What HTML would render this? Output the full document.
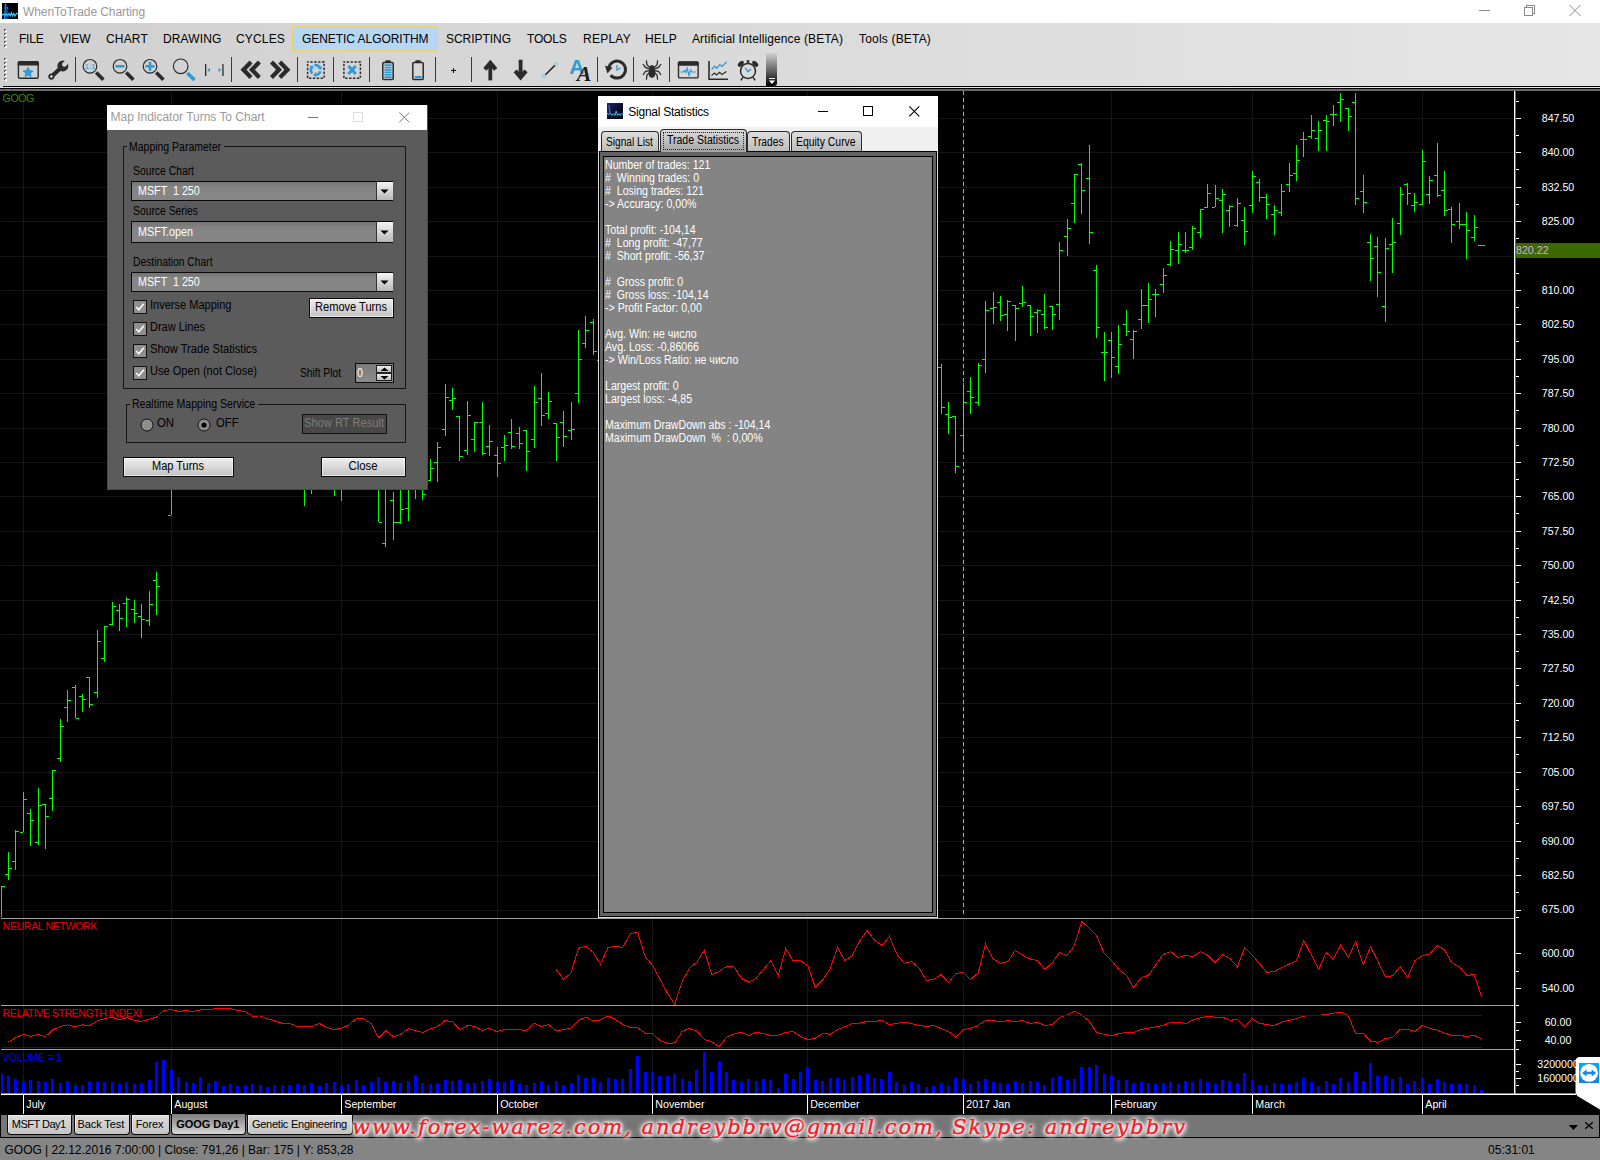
<!DOCTYPE html><html><head><meta charset="utf-8"><title>WhenToTrade Charting</title><style>html,body{margin:0;padding:0;background:#000}
body{position:relative;width:1600px;height:1160px;overflow:hidden;font-family:"Liberation Sans",sans-serif}
.a{position:absolute}
.t{position:absolute;white-space:pre;}
</style></head><body><svg class="a" style="left:0;top:0" width="1600" height="1160" viewBox="0 0 1600 1160" shape-rendering="crispEdges"><rect x="23" y="91" width="1" height="827" fill="#151515"/><rect x="171" y="91" width="1" height="827" fill="#151515"/><rect x="341" y="91" width="1" height="827" fill="#151515"/><rect x="497" y="91" width="1" height="827" fill="#151515"/><rect x="652" y="91" width="1" height="827" fill="#151515"/><rect x="807" y="91" width="1" height="827" fill="#151515"/><rect x="963" y="91" width="1" height="827" fill="#151515"/><rect x="1111" y="91" width="1" height="827" fill="#151515"/><rect x="1252" y="91" width="1" height="827" fill="#151515"/><rect x="1422" y="91" width="1" height="827" fill="#151515"/><rect x="0" y="118" width="1514" height="1" fill="#151515"/><rect x="0" y="152" width="1514" height="1" fill="#151515"/><rect x="0" y="187" width="1514" height="1" fill="#151515"/><rect x="0" y="221" width="1514" height="1" fill="#151515"/><rect x="0" y="256" width="1514" height="1" fill="#151515"/><rect x="0" y="290" width="1514" height="1" fill="#151515"/><rect x="0" y="324" width="1514" height="1" fill="#151515"/><rect x="0" y="359" width="1514" height="1" fill="#151515"/><rect x="0" y="393" width="1514" height="1" fill="#151515"/><rect x="0" y="428" width="1514" height="1" fill="#151515"/><rect x="0" y="462" width="1514" height="1" fill="#151515"/><rect x="0" y="496" width="1514" height="1" fill="#151515"/><rect x="0" y="531" width="1514" height="1" fill="#151515"/><rect x="0" y="565" width="1514" height="1" fill="#151515"/><rect x="0" y="600" width="1514" height="1" fill="#151515"/><rect x="0" y="634" width="1514" height="1" fill="#151515"/><rect x="0" y="668" width="1514" height="1" fill="#151515"/><rect x="0" y="703" width="1514" height="1" fill="#151515"/><rect x="0" y="737" width="1514" height="1" fill="#151515"/><rect x="0" y="772" width="1514" height="1" fill="#151515"/><rect x="0" y="806" width="1514" height="1" fill="#151515"/><rect x="0" y="841" width="1514" height="1" fill="#151515"/><rect x="0" y="875" width="1514" height="1" fill="#151515"/><rect x="0" y="910" width="1514" height="1" fill="#151515"/><rect x="23" y="919" width="1" height="175" fill="#151515"/><rect x="171" y="919" width="1" height="175" fill="#151515"/><rect x="341" y="919" width="1" height="175" fill="#151515"/><rect x="497" y="919" width="1" height="175" fill="#151515"/><rect x="652" y="919" width="1" height="175" fill="#151515"/><rect x="807" y="919" width="1" height="175" fill="#151515"/><rect x="963" y="919" width="1" height="175" fill="#151515"/><rect x="1111" y="919" width="1" height="175" fill="#151515"/><rect x="1252" y="919" width="1" height="175" fill="#151515"/><rect x="1422" y="919" width="1" height="175" fill="#151515"/><rect x="0" y="918" width="1514" height="1" fill="#a0a0a0"/><rect x="0" y="1005" width="1514" height="1" fill="#a0a0a0"/><rect x="0" y="1049" width="1514" height="1" fill="#a0a0a0"/><rect x="1" y="886" width="1" height="31" fill="#00ff00"/><rect x="2" y="886" width="3" height="1" fill="#00ff00"/><rect x="8" y="852" width="1" height="28" fill="#00ff00"/><rect x="5" y="874" width="3" height="1" fill="#00ff00"/><rect x="9" y="868" width="3" height="1" fill="#00ff00"/><rect x="15" y="830" width="1" height="40" fill="#00ff00"/><rect x="12" y="861" width="3" height="1" fill="#00ff00"/><rect x="16" y="831" width="3" height="1" fill="#00ff00"/><rect x="23" y="792" width="1" height="40" fill="#00ff00"/><rect x="20" y="832" width="3" height="1" fill="#00ff00"/><rect x="24" y="799" width="3" height="1" fill="#00ff00"/><rect x="30" y="809" width="1" height="37" fill="#00ff00"/><rect x="27" y="813" width="3" height="1" fill="#00ff00"/><rect x="31" y="820" width="3" height="1" fill="#00ff00"/><rect x="38" y="788" width="1" height="57" fill="#00ff00"/><rect x="35" y="842" width="3" height="1" fill="#00ff00"/><rect x="39" y="805" width="3" height="1" fill="#00ff00"/><rect x="45" y="804" width="1" height="45" fill="#00ff00"/><rect x="42" y="804" width="3" height="1" fill="#00ff00"/><rect x="46" y="816" width="3" height="1" fill="#00ff00"/><rect x="52" y="770" width="1" height="41" fill="#00ff00"/><rect x="49" y="798" width="3" height="1" fill="#00ff00"/><rect x="53" y="770" width="3" height="1" fill="#00ff00"/><rect x="60" y="719" width="1" height="43" fill="#00ff00"/><rect x="57" y="758" width="3" height="1" fill="#00ff00"/><rect x="61" y="726" width="3" height="1" fill="#00ff00"/><rect x="67" y="690" width="1" height="32" fill="#00ff00"/><rect x="64" y="707" width="3" height="1" fill="#00ff00"/><rect x="68" y="700" width="3" height="1" fill="#00ff00"/><rect x="75" y="685" width="1" height="33" fill="#00ff00"/><rect x="72" y="687" width="3" height="1" fill="#00ff00"/><rect x="76" y="718" width="3" height="1" fill="#00ff00"/><rect x="82" y="694" width="1" height="18" fill="#00ff00"/><rect x="79" y="696" width="3" height="1" fill="#00ff00"/><rect x="83" y="699" width="3" height="1" fill="#00ff00"/><rect x="89" y="677" width="1" height="31" fill="#00ff00"/><rect x="86" y="677" width="3" height="1" fill="#00ff00"/><rect x="90" y="704" width="3" height="1" fill="#00ff00"/><rect x="97" y="630" width="1" height="68" fill="#00ff00"/><rect x="94" y="692" width="3" height="1" fill="#00ff00"/><rect x="98" y="641" width="3" height="1" fill="#00ff00"/><rect x="104" y="626" width="1" height="36" fill="#00ff00"/><rect x="101" y="658" width="3" height="1" fill="#00ff00"/><rect x="105" y="626" width="3" height="1" fill="#00ff00"/><rect x="112" y="602" width="1" height="23" fill="#00ff00"/><rect x="109" y="624" width="3" height="1" fill="#00ff00"/><rect x="113" y="606" width="3" height="1" fill="#00ff00"/><rect x="119" y="604" width="1" height="27" fill="#00ff00"/><rect x="116" y="610" width="3" height="1" fill="#00ff00"/><rect x="120" y="618" width="3" height="1" fill="#00ff00"/><rect x="126" y="597" width="1" height="30" fill="#00ff00"/><rect x="123" y="603" width="3" height="1" fill="#00ff00"/><rect x="127" y="599" width="3" height="1" fill="#00ff00"/><rect x="134" y="600" width="1" height="23" fill="#00ff00"/><rect x="131" y="609" width="3" height="1" fill="#00ff00"/><rect x="135" y="613" width="3" height="1" fill="#00ff00"/><rect x="141" y="604" width="1" height="34" fill="#00ff00"/><rect x="138" y="616" width="3" height="1" fill="#00ff00"/><rect x="142" y="619" width="3" height="1" fill="#00ff00"/><rect x="149" y="591" width="1" height="35" fill="#00ff00"/><rect x="146" y="620" width="3" height="1" fill="#00ff00"/><rect x="150" y="604" width="3" height="1" fill="#00ff00"/><rect x="156" y="572" width="1" height="43" fill="#00ff00"/><rect x="153" y="580" width="3" height="1" fill="#00ff00"/><rect x="157" y="586" width="3" height="1" fill="#00ff00"/><rect x="171" y="480" width="1" height="35" fill="#00ff00"/><rect x="168" y="515" width="3" height="1" fill="#00ff00"/><rect x="304" y="480" width="1" height="26" fill="#00ff00"/><rect x="311" y="480" width="1" height="14" fill="#00ff00"/><rect x="334" y="480" width="1" height="16" fill="#00ff00"/><rect x="341" y="480" width="1" height="21" fill="#00ff00"/><rect x="378" y="480" width="1" height="42" fill="#00ff00"/><rect x="379" y="522" width="3" height="1" fill="#00ff00"/><rect x="385" y="480" width="1" height="67" fill="#00ff00"/><rect x="382" y="543" width="3" height="1" fill="#00ff00"/><rect x="393" y="492" width="1" height="48" fill="#00ff00"/><rect x="390" y="500" width="3" height="1" fill="#00ff00"/><rect x="394" y="522" width="3" height="1" fill="#00ff00"/><rect x="400" y="480" width="1" height="44" fill="#00ff00"/><rect x="397" y="522" width="3" height="1" fill="#00ff00"/><rect x="401" y="509" width="3" height="1" fill="#00ff00"/><rect x="408" y="480" width="1" height="41" fill="#00ff00"/><rect x="405" y="508" width="3" height="1" fill="#00ff00"/><rect x="415" y="480" width="1" height="19" fill="#00ff00"/><rect x="422" y="480" width="1" height="20" fill="#00ff00"/><rect x="423" y="494" width="3" height="1" fill="#00ff00"/><rect x="430" y="459" width="1" height="22" fill="#00ff00"/><rect x="427" y="480" width="3" height="1" fill="#00ff00"/><rect x="431" y="468" width="3" height="1" fill="#00ff00"/><rect x="437" y="442" width="1" height="40" fill="#00ff00"/><rect x="434" y="462" width="3" height="1" fill="#00ff00"/><rect x="438" y="447" width="3" height="1" fill="#00ff00"/><rect x="445" y="384" width="1" height="52" fill="#00ff00"/><rect x="442" y="429" width="3" height="1" fill="#00ff00"/><rect x="446" y="397" width="3" height="1" fill="#00ff00"/><rect x="452" y="388" width="1" height="22" fill="#00ff00"/><rect x="449" y="400" width="3" height="1" fill="#00ff00"/><rect x="453" y="398" width="3" height="1" fill="#00ff00"/><rect x="459" y="416" width="1" height="45" fill="#00ff00"/><rect x="456" y="416" width="3" height="1" fill="#00ff00"/><rect x="460" y="456" width="3" height="1" fill="#00ff00"/><rect x="467" y="401" width="1" height="54" fill="#00ff00"/><rect x="464" y="450" width="3" height="1" fill="#00ff00"/><rect x="468" y="415" width="3" height="1" fill="#00ff00"/><rect x="474" y="422" width="1" height="30" fill="#00ff00"/><rect x="471" y="439" width="3" height="1" fill="#00ff00"/><rect x="475" y="422" width="3" height="1" fill="#00ff00"/><rect x="482" y="402" width="1" height="53" fill="#00ff00"/><rect x="479" y="422" width="3" height="1" fill="#00ff00"/><rect x="483" y="453" width="3" height="1" fill="#00ff00"/><rect x="489" y="425" width="1" height="31" fill="#00ff00"/><rect x="486" y="446" width="3" height="1" fill="#00ff00"/><rect x="490" y="441" width="3" height="1" fill="#00ff00"/><rect x="497" y="447" width="1" height="30" fill="#00ff00"/><rect x="494" y="455" width="3" height="1" fill="#00ff00"/><rect x="498" y="463" width="3" height="1" fill="#00ff00"/><rect x="504" y="435" width="1" height="26" fill="#00ff00"/><rect x="501" y="447" width="3" height="1" fill="#00ff00"/><rect x="505" y="445" width="3" height="1" fill="#00ff00"/><rect x="511" y="419" width="1" height="30" fill="#00ff00"/><rect x="508" y="432" width="3" height="1" fill="#00ff00"/><rect x="512" y="446" width="3" height="1" fill="#00ff00"/><rect x="519" y="427" width="1" height="22" fill="#00ff00"/><rect x="516" y="433" width="3" height="1" fill="#00ff00"/><rect x="520" y="443" width="3" height="1" fill="#00ff00"/><rect x="526" y="430" width="1" height="41" fill="#00ff00"/><rect x="523" y="430" width="3" height="1" fill="#00ff00"/><rect x="527" y="451" width="3" height="1" fill="#00ff00"/><rect x="534" y="386" width="1" height="62" fill="#00ff00"/><rect x="531" y="439" width="3" height="1" fill="#00ff00"/><rect x="535" y="402" width="3" height="1" fill="#00ff00"/><rect x="541" y="373" width="1" height="53" fill="#00ff00"/><rect x="538" y="398" width="3" height="1" fill="#00ff00"/><rect x="542" y="415" width="3" height="1" fill="#00ff00"/><rect x="548" y="392" width="1" height="27" fill="#00ff00"/><rect x="545" y="413" width="3" height="1" fill="#00ff00"/><rect x="549" y="401" width="3" height="1" fill="#00ff00"/><rect x="556" y="423" width="1" height="38" fill="#00ff00"/><rect x="553" y="423" width="3" height="1" fill="#00ff00"/><rect x="557" y="437" width="3" height="1" fill="#00ff00"/><rect x="563" y="411" width="1" height="36" fill="#00ff00"/><rect x="560" y="422" width="3" height="1" fill="#00ff00"/><rect x="564" y="436" width="3" height="1" fill="#00ff00"/><rect x="571" y="402" width="1" height="38" fill="#00ff00"/><rect x="568" y="430" width="3" height="1" fill="#00ff00"/><rect x="572" y="429" width="3" height="1" fill="#00ff00"/><rect x="578" y="330" width="1" height="73" fill="#00ff00"/><rect x="575" y="393" width="3" height="1" fill="#00ff00"/><rect x="579" y="359" width="3" height="1" fill="#00ff00"/><rect x="585" y="316" width="1" height="32" fill="#00ff00"/><rect x="582" y="343" width="3" height="1" fill="#00ff00"/><rect x="586" y="330" width="3" height="1" fill="#00ff00"/><rect x="593" y="319" width="1" height="36" fill="#00ff00"/><rect x="590" y="322" width="3" height="1" fill="#00ff00"/><rect x="594" y="351" width="3" height="1" fill="#00ff00"/><rect x="941" y="364" width="1" height="50" fill="#00ff00"/><rect x="938" y="367" width="3" height="1" fill="#00ff00"/><rect x="942" y="407" width="3" height="1" fill="#00ff00"/><rect x="948" y="402" width="1" height="32" fill="#00ff00"/><rect x="945" y="414" width="3" height="1" fill="#00ff00"/><rect x="949" y="417" width="3" height="1" fill="#00ff00"/><rect x="955" y="416" width="1" height="57" fill="#00ff00"/><rect x="952" y="416" width="3" height="1" fill="#00ff00"/><rect x="956" y="466" width="3" height="1" fill="#00ff00"/><rect x="963" y="383" width="1" height="65" fill="#00ff00"/><rect x="960" y="435" width="3" height="1" fill="#00ff00"/><rect x="964" y="402" width="3" height="1" fill="#00ff00"/><rect x="970" y="377" width="1" height="37" fill="#00ff00"/><rect x="967" y="391" width="3" height="1" fill="#00ff00"/><rect x="971" y="397" width="3" height="1" fill="#00ff00"/><rect x="978" y="363" width="1" height="43" fill="#00ff00"/><rect x="975" y="402" width="3" height="1" fill="#00ff00"/><rect x="979" y="365" width="3" height="1" fill="#00ff00"/><rect x="985" y="301" width="1" height="72" fill="#00ff00"/><rect x="982" y="359" width="3" height="1" fill="#00ff00"/><rect x="986" y="310" width="3" height="1" fill="#00ff00"/><rect x="993" y="292" width="1" height="32" fill="#00ff00"/><rect x="990" y="308" width="3" height="1" fill="#00ff00"/><rect x="994" y="307" width="3" height="1" fill="#00ff00"/><rect x="1000" y="296" width="1" height="25" fill="#00ff00"/><rect x="997" y="302" width="3" height="1" fill="#00ff00"/><rect x="1001" y="315" width="3" height="1" fill="#00ff00"/><rect x="1007" y="300" width="1" height="31" fill="#00ff00"/><rect x="1004" y="314" width="3" height="1" fill="#00ff00"/><rect x="1008" y="301" width="3" height="1" fill="#00ff00"/><rect x="1015" y="305" width="1" height="36" fill="#00ff00"/><rect x="1012" y="305" width="3" height="1" fill="#00ff00"/><rect x="1016" y="308" width="3" height="1" fill="#00ff00"/><rect x="1022" y="286" width="1" height="21" fill="#00ff00"/><rect x="1019" y="303" width="3" height="1" fill="#00ff00"/><rect x="1023" y="302" width="3" height="1" fill="#00ff00"/><rect x="1030" y="305" width="1" height="31" fill="#00ff00"/><rect x="1027" y="305" width="3" height="1" fill="#00ff00"/><rect x="1031" y="316" width="3" height="1" fill="#00ff00"/><rect x="1037" y="309" width="1" height="24" fill="#00ff00"/><rect x="1034" y="312" width="3" height="1" fill="#00ff00"/><rect x="1038" y="310" width="3" height="1" fill="#00ff00"/><rect x="1044" y="294" width="1" height="35" fill="#00ff00"/><rect x="1041" y="314" width="3" height="1" fill="#00ff00"/><rect x="1045" y="327" width="3" height="1" fill="#00ff00"/><rect x="1052" y="306" width="1" height="24" fill="#00ff00"/><rect x="1049" y="306" width="3" height="1" fill="#00ff00"/><rect x="1053" y="314" width="3" height="1" fill="#00ff00"/><rect x="1059" y="242" width="1" height="78" fill="#00ff00"/><rect x="1056" y="304" width="3" height="1" fill="#00ff00"/><rect x="1060" y="250" width="3" height="1" fill="#00ff00"/><rect x="1067" y="219" width="1" height="37" fill="#00ff00"/><rect x="1064" y="236" width="3" height="1" fill="#00ff00"/><rect x="1068" y="228" width="3" height="1" fill="#00ff00"/><rect x="1074" y="174" width="1" height="49" fill="#00ff00"/><rect x="1071" y="203" width="3" height="1" fill="#00ff00"/><rect x="1075" y="174" width="3" height="1" fill="#00ff00"/><rect x="1081" y="163" width="1" height="51" fill="#00ff00"/><rect x="1078" y="164" width="3" height="1" fill="#00ff00"/><rect x="1082" y="190" width="3" height="1" fill="#00ff00"/><rect x="1089" y="145" width="1" height="99" fill="#00ff00"/><rect x="1086" y="178" width="3" height="1" fill="#00ff00"/><rect x="1090" y="232" width="3" height="1" fill="#00ff00"/><rect x="1096" y="265" width="1" height="73" fill="#00ff00"/><rect x="1093" y="270" width="3" height="1" fill="#00ff00"/><rect x="1097" y="327" width="3" height="1" fill="#00ff00"/><rect x="1104" y="332" width="1" height="49" fill="#00ff00"/><rect x="1101" y="352" width="3" height="1" fill="#00ff00"/><rect x="1105" y="352" width="3" height="1" fill="#00ff00"/><rect x="1111" y="332" width="1" height="46" fill="#00ff00"/><rect x="1108" y="340" width="3" height="1" fill="#00ff00"/><rect x="1112" y="357" width="3" height="1" fill="#00ff00"/><rect x="1118" y="325" width="1" height="49" fill="#00ff00"/><rect x="1115" y="366" width="3" height="1" fill="#00ff00"/><rect x="1119" y="344" width="3" height="1" fill="#00ff00"/><rect x="1126" y="310" width="1" height="26" fill="#00ff00"/><rect x="1123" y="324" width="3" height="1" fill="#00ff00"/><rect x="1127" y="331" width="3" height="1" fill="#00ff00"/><rect x="1133" y="330" width="1" height="29" fill="#00ff00"/><rect x="1130" y="339" width="3" height="1" fill="#00ff00"/><rect x="1134" y="331" width="3" height="1" fill="#00ff00"/><rect x="1141" y="289" width="1" height="40" fill="#00ff00"/><rect x="1138" y="319" width="3" height="1" fill="#00ff00"/><rect x="1142" y="305" width="3" height="1" fill="#00ff00"/><rect x="1148" y="283" width="1" height="40" fill="#00ff00"/><rect x="1145" y="305" width="3" height="1" fill="#00ff00"/><rect x="1149" y="299" width="3" height="1" fill="#00ff00"/><rect x="1155" y="289" width="1" height="28" fill="#00ff00"/><rect x="1152" y="294" width="3" height="1" fill="#00ff00"/><rect x="1156" y="294" width="3" height="1" fill="#00ff00"/><rect x="1163" y="268" width="1" height="25" fill="#00ff00"/><rect x="1160" y="284" width="3" height="1" fill="#00ff00"/><rect x="1164" y="275" width="3" height="1" fill="#00ff00"/><rect x="1170" y="241" width="1" height="25" fill="#00ff00"/><rect x="1167" y="264" width="3" height="1" fill="#00ff00"/><rect x="1171" y="249" width="3" height="1" fill="#00ff00"/><rect x="1178" y="232" width="1" height="32" fill="#00ff00"/><rect x="1175" y="250" width="3" height="1" fill="#00ff00"/><rect x="1179" y="244" width="3" height="1" fill="#00ff00"/><rect x="1185" y="232" width="1" height="21" fill="#00ff00"/><rect x="1182" y="250" width="3" height="1" fill="#00ff00"/><rect x="1186" y="250" width="3" height="1" fill="#00ff00"/><rect x="1192" y="226" width="1" height="24" fill="#00ff00"/><rect x="1189" y="247" width="3" height="1" fill="#00ff00"/><rect x="1193" y="228" width="3" height="1" fill="#00ff00"/><rect x="1200" y="209" width="1" height="29" fill="#00ff00"/><rect x="1197" y="232" width="3" height="1" fill="#00ff00"/><rect x="1201" y="209" width="3" height="1" fill="#00ff00"/><rect x="1207" y="184" width="1" height="24" fill="#00ff00"/><rect x="1204" y="207" width="3" height="1" fill="#00ff00"/><rect x="1208" y="193" width="3" height="1" fill="#00ff00"/><rect x="1215" y="185" width="1" height="22" fill="#00ff00"/><rect x="1212" y="207" width="3" height="1" fill="#00ff00"/><rect x="1216" y="198" width="3" height="1" fill="#00ff00"/><rect x="1222" y="189" width="1" height="44" fill="#00ff00"/><rect x="1219" y="200" width="3" height="1" fill="#00ff00"/><rect x="1223" y="194" width="3" height="1" fill="#00ff00"/><rect x="1229" y="205" width="1" height="22" fill="#00ff00"/><rect x="1226" y="210" width="3" height="1" fill="#00ff00"/><rect x="1230" y="206" width="3" height="1" fill="#00ff00"/><rect x="1237" y="198" width="1" height="29" fill="#00ff00"/><rect x="1234" y="225" width="3" height="1" fill="#00ff00"/><rect x="1238" y="203" width="3" height="1" fill="#00ff00"/><rect x="1244" y="207" width="1" height="38" fill="#00ff00"/><rect x="1241" y="220" width="3" height="1" fill="#00ff00"/><rect x="1245" y="231" width="3" height="1" fill="#00ff00"/><rect x="1252" y="171" width="1" height="42" fill="#00ff00"/><rect x="1249" y="205" width="3" height="1" fill="#00ff00"/><rect x="1253" y="176" width="3" height="1" fill="#00ff00"/><rect x="1259" y="179" width="1" height="23" fill="#00ff00"/><rect x="1256" y="182" width="3" height="1" fill="#00ff00"/><rect x="1260" y="197" width="3" height="1" fill="#00ff00"/><rect x="1266" y="194" width="1" height="25" fill="#00ff00"/><rect x="1263" y="197" width="3" height="1" fill="#00ff00"/><rect x="1267" y="204" width="3" height="1" fill="#00ff00"/><rect x="1274" y="205" width="1" height="30" fill="#00ff00"/><rect x="1271" y="214" width="3" height="1" fill="#00ff00"/><rect x="1275" y="210" width="3" height="1" fill="#00ff00"/><rect x="1281" y="184" width="1" height="32" fill="#00ff00"/><rect x="1278" y="212" width="3" height="1" fill="#00ff00"/><rect x="1282" y="191" width="3" height="1" fill="#00ff00"/><rect x="1289" y="163" width="1" height="29" fill="#00ff00"/><rect x="1286" y="184" width="3" height="1" fill="#00ff00"/><rect x="1290" y="175" width="3" height="1" fill="#00ff00"/><rect x="1296" y="145" width="1" height="36" fill="#00ff00"/><rect x="1293" y="173" width="3" height="1" fill="#00ff00"/><rect x="1297" y="160" width="3" height="1" fill="#00ff00"/><rect x="1303" y="132" width="1" height="25" fill="#00ff00"/><rect x="1300" y="139" width="3" height="1" fill="#00ff00"/><rect x="1304" y="139" width="3" height="1" fill="#00ff00"/><rect x="1311" y="115" width="1" height="24" fill="#00ff00"/><rect x="1308" y="136" width="3" height="1" fill="#00ff00"/><rect x="1312" y="130" width="3" height="1" fill="#00ff00"/><rect x="1318" y="121" width="1" height="30" fill="#00ff00"/><rect x="1315" y="138" width="3" height="1" fill="#00ff00"/><rect x="1319" y="130" width="3" height="1" fill="#00ff00"/><rect x="1326" y="115" width="1" height="36" fill="#00ff00"/><rect x="1323" y="120" width="3" height="1" fill="#00ff00"/><rect x="1327" y="121" width="3" height="1" fill="#00ff00"/><rect x="1333" y="105" width="1" height="21" fill="#00ff00"/><rect x="1330" y="114" width="3" height="1" fill="#00ff00"/><rect x="1334" y="114" width="3" height="1" fill="#00ff00"/><rect x="1340" y="93" width="1" height="29" fill="#00ff00"/><rect x="1337" y="102" width="3" height="1" fill="#00ff00"/><rect x="1341" y="99" width="3" height="1" fill="#00ff00"/><rect x="1348" y="108" width="1" height="23" fill="#00ff00"/><rect x="1345" y="108" width="3" height="1" fill="#00ff00"/><rect x="1349" y="116" width="3" height="1" fill="#00ff00"/><rect x="1355" y="93" width="1" height="112" fill="#00ff00"/><rect x="1352" y="102" width="3" height="1" fill="#00ff00"/><rect x="1356" y="198" width="3" height="1" fill="#00ff00"/><rect x="1363" y="175" width="1" height="38" fill="#00ff00"/><rect x="1360" y="191" width="3" height="1" fill="#00ff00"/><rect x="1364" y="202" width="3" height="1" fill="#00ff00"/><rect x="1370" y="234" width="1" height="47" fill="#00ff00"/><rect x="1367" y="242" width="3" height="1" fill="#00ff00"/><rect x="1371" y="258" width="3" height="1" fill="#00ff00"/><rect x="1377" y="237" width="1" height="60" fill="#00ff00"/><rect x="1374" y="246" width="3" height="1" fill="#00ff00"/><rect x="1378" y="272" width="3" height="1" fill="#00ff00"/><rect x="1385" y="238" width="1" height="84" fill="#00ff00"/><rect x="1382" y="306" width="3" height="1" fill="#00ff00"/><rect x="1386" y="248" width="3" height="1" fill="#00ff00"/><rect x="1392" y="218" width="1" height="55" fill="#00ff00"/><rect x="1389" y="244" width="3" height="1" fill="#00ff00"/><rect x="1393" y="242" width="3" height="1" fill="#00ff00"/><rect x="1400" y="187" width="1" height="48" fill="#00ff00"/><rect x="1397" y="223" width="3" height="1" fill="#00ff00"/><rect x="1401" y="194" width="3" height="1" fill="#00ff00"/><rect x="1407" y="183" width="1" height="22" fill="#00ff00"/><rect x="1404" y="184" width="3" height="1" fill="#00ff00"/><rect x="1408" y="193" width="3" height="1" fill="#00ff00"/><rect x="1414" y="193" width="1" height="19" fill="#00ff00"/><rect x="1411" y="205" width="3" height="1" fill="#00ff00"/><rect x="1415" y="202" width="3" height="1" fill="#00ff00"/><rect x="1422" y="150" width="1" height="55" fill="#00ff00"/><rect x="1419" y="204" width="3" height="1" fill="#00ff00"/><rect x="1423" y="161" width="3" height="1" fill="#00ff00"/><rect x="1429" y="176" width="1" height="28" fill="#00ff00"/><rect x="1426" y="194" width="3" height="1" fill="#00ff00"/><rect x="1430" y="180" width="3" height="1" fill="#00ff00"/><rect x="1437" y="143" width="1" height="54" fill="#00ff00"/><rect x="1434" y="175" width="3" height="1" fill="#00ff00"/><rect x="1438" y="195" width="3" height="1" fill="#00ff00"/><rect x="1444" y="171" width="1" height="45" fill="#00ff00"/><rect x="1441" y="190" width="3" height="1" fill="#00ff00"/><rect x="1445" y="210" width="3" height="1" fill="#00ff00"/><rect x="1451" y="207" width="1" height="36" fill="#00ff00"/><rect x="1448" y="209" width="3" height="1" fill="#00ff00"/><rect x="1452" y="224" width="3" height="1" fill="#00ff00"/><rect x="1459" y="203" width="1" height="26" fill="#00ff00"/><rect x="1456" y="221" width="3" height="1" fill="#00ff00"/><rect x="1460" y="224" width="3" height="1" fill="#00ff00"/><rect x="1466" y="212" width="1" height="47" fill="#00ff00"/><rect x="1463" y="224" width="3" height="1" fill="#00ff00"/><rect x="1467" y="230" width="3" height="1" fill="#00ff00"/><rect x="1474" y="215" width="1" height="26" fill="#00ff00"/><rect x="1471" y="237" width="3" height="1" fill="#00ff00"/><rect x="1475" y="227" width="3" height="1" fill="#00ff00"/><rect x="1478" y="245" width="7" height="1" fill="#00ff00"/><rect x="597" y="360" width="1" height="1" fill="#00ff00"/><rect x="963" y="91" width="1" height="4" fill="#a8a8a8"/><rect x="963" y="98" width="1" height="4" fill="#a8a8a8"/><rect x="963" y="105" width="1" height="4" fill="#a8a8a8"/><rect x="963" y="112" width="1" height="4" fill="#a8a8a8"/><rect x="963" y="119" width="1" height="4" fill="#a8a8a8"/><rect x="963" y="126" width="1" height="4" fill="#a8a8a8"/><rect x="963" y="133" width="1" height="4" fill="#a8a8a8"/><rect x="963" y="140" width="1" height="4" fill="#a8a8a8"/><rect x="963" y="147" width="1" height="4" fill="#a8a8a8"/><rect x="963" y="154" width="1" height="4" fill="#a8a8a8"/><rect x="963" y="161" width="1" height="4" fill="#a8a8a8"/><rect x="963" y="168" width="1" height="4" fill="#a8a8a8"/><rect x="963" y="175" width="1" height="4" fill="#a8a8a8"/><rect x="963" y="182" width="1" height="4" fill="#a8a8a8"/><rect x="963" y="189" width="1" height="4" fill="#a8a8a8"/><rect x="963" y="196" width="1" height="4" fill="#a8a8a8"/><rect x="963" y="203" width="1" height="4" fill="#a8a8a8"/><rect x="963" y="210" width="1" height="4" fill="#a8a8a8"/><rect x="963" y="217" width="1" height="4" fill="#a8a8a8"/><rect x="963" y="224" width="1" height="4" fill="#a8a8a8"/><rect x="963" y="231" width="1" height="4" fill="#a8a8a8"/><rect x="963" y="238" width="1" height="4" fill="#a8a8a8"/><rect x="963" y="245" width="1" height="4" fill="#a8a8a8"/><rect x="963" y="252" width="1" height="4" fill="#a8a8a8"/><rect x="963" y="259" width="1" height="4" fill="#a8a8a8"/><rect x="963" y="266" width="1" height="4" fill="#a8a8a8"/><rect x="963" y="273" width="1" height="4" fill="#a8a8a8"/><rect x="963" y="280" width="1" height="4" fill="#a8a8a8"/><rect x="963" y="287" width="1" height="4" fill="#a8a8a8"/><rect x="963" y="294" width="1" height="4" fill="#a8a8a8"/><rect x="963" y="301" width="1" height="4" fill="#a8a8a8"/><rect x="963" y="308" width="1" height="4" fill="#a8a8a8"/><rect x="963" y="315" width="1" height="4" fill="#a8a8a8"/><rect x="963" y="322" width="1" height="4" fill="#a8a8a8"/><rect x="963" y="329" width="1" height="4" fill="#a8a8a8"/><rect x="963" y="336" width="1" height="4" fill="#a8a8a8"/><rect x="963" y="343" width="1" height="4" fill="#a8a8a8"/><rect x="963" y="350" width="1" height="4" fill="#a8a8a8"/><rect x="963" y="357" width="1" height="4" fill="#a8a8a8"/><rect x="963" y="364" width="1" height="4" fill="#a8a8a8"/><rect x="963" y="371" width="1" height="4" fill="#a8a8a8"/><rect x="963" y="378" width="1" height="4" fill="#a8a8a8"/><rect x="963" y="385" width="1" height="4" fill="#a8a8a8"/><rect x="963" y="392" width="1" height="4" fill="#a8a8a8"/><rect x="963" y="399" width="1" height="4" fill="#a8a8a8"/><rect x="963" y="406" width="1" height="4" fill="#a8a8a8"/><rect x="963" y="413" width="1" height="4" fill="#a8a8a8"/><rect x="963" y="420" width="1" height="4" fill="#a8a8a8"/><rect x="963" y="427" width="1" height="4" fill="#a8a8a8"/><rect x="963" y="434" width="1" height="4" fill="#a8a8a8"/><rect x="963" y="441" width="1" height="4" fill="#a8a8a8"/><rect x="963" y="448" width="1" height="4" fill="#a8a8a8"/><rect x="963" y="455" width="1" height="4" fill="#a8a8a8"/><rect x="963" y="462" width="1" height="4" fill="#a8a8a8"/><rect x="963" y="469" width="1" height="4" fill="#a8a8a8"/><rect x="963" y="476" width="1" height="4" fill="#a8a8a8"/><rect x="963" y="483" width="1" height="4" fill="#a8a8a8"/><rect x="963" y="490" width="1" height="4" fill="#a8a8a8"/><rect x="963" y="497" width="1" height="4" fill="#a8a8a8"/><rect x="963" y="504" width="1" height="4" fill="#a8a8a8"/><rect x="963" y="511" width="1" height="4" fill="#a8a8a8"/><rect x="963" y="518" width="1" height="4" fill="#a8a8a8"/><rect x="963" y="525" width="1" height="4" fill="#a8a8a8"/><rect x="963" y="532" width="1" height="4" fill="#a8a8a8"/><rect x="963" y="539" width="1" height="4" fill="#a8a8a8"/><rect x="963" y="546" width="1" height="4" fill="#a8a8a8"/><rect x="963" y="553" width="1" height="4" fill="#a8a8a8"/><rect x="963" y="560" width="1" height="4" fill="#a8a8a8"/><rect x="963" y="567" width="1" height="4" fill="#a8a8a8"/><rect x="963" y="574" width="1" height="4" fill="#a8a8a8"/><rect x="963" y="581" width="1" height="4" fill="#a8a8a8"/><rect x="963" y="588" width="1" height="4" fill="#a8a8a8"/><rect x="963" y="595" width="1" height="4" fill="#a8a8a8"/><rect x="963" y="602" width="1" height="4" fill="#a8a8a8"/><rect x="963" y="609" width="1" height="4" fill="#a8a8a8"/><rect x="963" y="616" width="1" height="4" fill="#a8a8a8"/><rect x="963" y="623" width="1" height="4" fill="#a8a8a8"/><rect x="963" y="630" width="1" height="4" fill="#a8a8a8"/><rect x="963" y="637" width="1" height="4" fill="#a8a8a8"/><rect x="963" y="644" width="1" height="4" fill="#a8a8a8"/><rect x="963" y="651" width="1" height="4" fill="#a8a8a8"/><rect x="963" y="658" width="1" height="4" fill="#a8a8a8"/><rect x="963" y="665" width="1" height="4" fill="#a8a8a8"/><rect x="963" y="672" width="1" height="4" fill="#a8a8a8"/><rect x="963" y="679" width="1" height="4" fill="#a8a8a8"/><rect x="963" y="686" width="1" height="4" fill="#a8a8a8"/><rect x="963" y="693" width="1" height="4" fill="#a8a8a8"/><rect x="963" y="700" width="1" height="4" fill="#a8a8a8"/><rect x="963" y="707" width="1" height="4" fill="#a8a8a8"/><rect x="963" y="714" width="1" height="4" fill="#a8a8a8"/><rect x="963" y="721" width="1" height="4" fill="#a8a8a8"/><rect x="963" y="728" width="1" height="4" fill="#a8a8a8"/><rect x="963" y="735" width="1" height="4" fill="#a8a8a8"/><rect x="963" y="742" width="1" height="4" fill="#a8a8a8"/><rect x="963" y="749" width="1" height="4" fill="#a8a8a8"/><rect x="963" y="756" width="1" height="4" fill="#a8a8a8"/><rect x="963" y="763" width="1" height="4" fill="#a8a8a8"/><rect x="963" y="770" width="1" height="4" fill="#a8a8a8"/><rect x="963" y="777" width="1" height="4" fill="#a8a8a8"/><rect x="963" y="784" width="1" height="4" fill="#a8a8a8"/><rect x="963" y="791" width="1" height="4" fill="#a8a8a8"/><rect x="963" y="798" width="1" height="4" fill="#a8a8a8"/><rect x="963" y="805" width="1" height="4" fill="#a8a8a8"/><rect x="963" y="812" width="1" height="4" fill="#a8a8a8"/><rect x="963" y="819" width="1" height="4" fill="#a8a8a8"/><rect x="963" y="826" width="1" height="4" fill="#a8a8a8"/><rect x="963" y="833" width="1" height="4" fill="#a8a8a8"/><rect x="963" y="840" width="1" height="4" fill="#a8a8a8"/><rect x="963" y="847" width="1" height="4" fill="#a8a8a8"/><rect x="963" y="854" width="1" height="4" fill="#a8a8a8"/><rect x="963" y="861" width="1" height="4" fill="#a8a8a8"/><rect x="963" y="868" width="1" height="4" fill="#a8a8a8"/><rect x="963" y="875" width="1" height="4" fill="#a8a8a8"/><rect x="963" y="882" width="1" height="4" fill="#a8a8a8"/><rect x="963" y="889" width="1" height="4" fill="#a8a8a8"/><rect x="963" y="896" width="1" height="4" fill="#a8a8a8"/><rect x="963" y="903" width="1" height="4" fill="#a8a8a8"/><rect x="963" y="910" width="1" height="4" fill="#a8a8a8"/><polyline points="556.2,969.4 563.6,979.5 571.0,973.0 578.4,948.3 585.8,946.4 593.2,952.4 600.6,964.2 608.0,947.5 615.4,946.2 622.9,947.5 630.3,933.4 637.7,932.4 645.1,956.4 652.5,965.4 659.9,979.2 667.3,993.0 674.7,1004.4 682.1,981.6 689.5,968.3 696.9,962.1 704.3,950.4 711.7,974.6 719.1,971.5 726.5,966.5 733.9,966.5 741.3,978.4 748.7,982.1 756.1,978.4 763.5,969.4 770.9,960.5 778.3,975.6 785.7,948.6 793.1,960.5 800.5,960.5 807.9,965.9 815.3,987.3 822.7,980.0 830.1,968.6 837.5,947.5 844.9,960.5 852.3,955.6 859.7,941.0 867.2,930.4 874.6,940.2 882.0,945.4 889.4,936.4 896.8,954.0 904.2,963.3 911.6,961.6 919.0,967.8 926.4,980.5 933.8,979.2 941.2,974.6 948.6,982.4 956.0,973.5 963.4,972.4 970.8,979.5 978.2,972.7 985.6,943.8 993.0,958.9 1000.4,963.3 1007.8,961.6 1015.2,950.4 1022.6,955.1 1030.0,958.9 1037.4,960.5 1044.8,969.4 1052.2,962.9 1059.6,952.4 1067.0,955.6 1074.4,945.4 1081.8,921.5 1089.2,928.0 1096.6,935.6 1104.0,953.2 1111.5,960.5 1118.9,969.4 1126.3,975.1 1133.7,987.6 1141.1,977.6 1148.5,975.4 1155.9,964.6 1163.3,954.5 1170.7,951.6 1178.1,957.6 1185.5,955.3 1192.9,956.8 1200.3,951.6 1207.7,955.1 1215.1,962.6 1222.5,954.5 1229.9,958.4 1237.3,966.7 1244.7,947.5 1252.1,954.8 1259.5,963.7 1266.9,972.4 1274.3,971.4 1281.7,967.8 1289.1,964.2 1296.5,960.8 1303.9,940.5 1311.3,954.8 1318.7,969.4 1326.1,952.7 1333.5,959.2 1340.9,944.7 1348.3,957.6 1355.7,941.5 1363.2,964.6 1370.6,946.7 1378.0,961.3 1385.4,977.2 1392.8,975.6 1400.2,966.5 1407.6,977.6 1415.0,960.5 1422.4,955.6 1429.8,954.0 1437.2,945.4 1444.6,949.9 1452.0,963.3 1459.4,966.5 1466.8,975.4 1474.2,974.6 1481.6,996.7" fill="none" stroke="#ff0000" stroke-width="1"/><polyline points="8.4,1041.8 15.8,1037.7 23.2,1034.3 30.6,1036.4 38.0,1034.5 45.4,1036.8 52.8,1029.8 60.2,1026.4 67.6,1024.9 75.0,1026.8 82.4,1024.9 89.8,1025.5 97.2,1020.8 104.6,1018.9 112.0,1017.1 119.4,1019.9 126.9,1017.6 134.3,1020.4 141.7,1021.4 149.1,1019.3 156.5,1017.1 163.9,1010.5 171.3,1009.6 178.7,1011.4 186.1,1010.5 193.5,1011.4 200.9,1009.9 208.3,1009.6 215.7,1008.6 223.1,1008.6 230.5,1008.6 237.9,1010.5 245.3,1011.4 252.7,1016.5 260.1,1015.8 267.5,1018.9 274.9,1020.8 282.3,1023.3 289.7,1023.3 297.1,1026.4 304.5,1026.4 311.9,1026.4 319.3,1023.3 326.7,1027.4 334.1,1029.6 341.5,1028.3 348.9,1024.9 356.3,1018.6 363.7,1018.6 371.1,1023.6 378.6,1037.7 386.0,1030.6 393.4,1036.8 400.8,1034.5 408.2,1028.7 415.6,1030.6 423.0,1032.4 430.4,1028.7 437.8,1026.4 445.2,1020.4 452.6,1021.8 460.0,1029.6 467.4,1025.5 474.8,1026.4 482.2,1030.6 489.6,1028.3 497.0,1031.7 504.4,1029.6 511.8,1029.6 519.2,1029.6 526.6,1030.6 534.0,1023.3 541.4,1026.4 548.8,1024.6 556.2,1030.6 563.6,1029.6 571.0,1028.3 578.4,1020.4 585.8,1017.1 593.2,1021.2 600.6,1019.9 608.0,1015.8 615.4,1019.5 622.9,1024.6 630.3,1027.4 637.7,1027.8 645.1,1033.0 652.5,1033.4 659.9,1040.5 667.3,1043.3 674.7,1042.9 682.1,1031.5 689.5,1028.3 696.9,1031.1 704.3,1039.6 711.7,1041.8 719.1,1046.7 726.5,1037.3 733.9,1033.9 741.3,1032.4 748.7,1035.4 756.1,1032.4 763.5,1033.6 770.9,1035.4 778.3,1035.4 785.7,1032.4 793.1,1031.5 800.5,1036.4 807.9,1039.6 815.3,1038.1 822.7,1033.4 830.1,1034.3 837.5,1029.6 844.9,1026.8 852.3,1023.6 859.7,1023.1 867.2,1021.4 874.6,1021.4 882.0,1020.4 889.4,1024.6 896.8,1023.3 904.2,1022.1 911.6,1023.6 919.0,1025.5 926.4,1026.4 933.8,1025.5 941.2,1028.7 948.6,1031.5 956.0,1037.3 963.4,1029.6 970.8,1028.3 978.2,1025.5 985.6,1020.4 993.0,1020.4 1000.4,1021.8 1007.8,1020.4 1015.2,1021.8 1022.6,1020.4 1030.0,1023.6 1037.4,1022.1 1044.8,1025.5 1052.2,1024.6 1059.6,1017.4 1067.0,1015.2 1074.4,1011.1 1081.8,1015.2 1089.2,1021.2 1096.6,1032.4 1104.0,1034.3 1111.5,1035.8 1118.9,1033.6 1126.3,1032.4 1133.7,1032.4 1141.1,1029.6 1148.5,1028.3 1155.9,1026.8 1163.3,1025.5 1170.7,1022.1 1178.1,1022.1 1185.5,1023.6 1192.9,1019.9 1200.3,1018.0 1207.7,1016.1 1215.1,1017.1 1222.5,1017.1 1229.9,1020.4 1237.3,1019.3 1244.7,1026.4 1252.1,1018.6 1259.5,1023.3 1266.9,1024.6 1274.3,1025.5 1281.7,1022.1 1289.1,1020.4 1296.5,1018.6 1303.9,1016.1 1311.3,1015.6 1318.7,1015.2 1326.1,1014.6 1333.5,1013.3 1340.9,1012.0 1348.3,1015.8 1355.7,1033.4 1363.2,1033.4 1370.6,1041.1 1378.0,1042.4 1385.4,1038.6 1392.8,1037.3 1400.2,1029.0 1407.6,1029.4 1415.0,1031.3 1422.4,1025.4 1429.8,1028.5 1437.2,1030.0 1444.6,1033.1 1452.0,1035.4 1459.4,1035.4 1466.8,1036.5 1474.2,1035.4 1481.6,1038.8" fill="none" stroke="#ff0000" stroke-width="1"/><rect x="2" y="1015" width="1480" height="1" fill="#0000ff"/><rect x="2" y="1047" width="1480" height="1" fill="#0000ff"/><rect x="0" y="1074" width="3" height="20" fill="#0000ff"/><rect x="7" y="1076" width="3" height="18" fill="#0000ff"/><rect x="14" y="1079" width="3" height="15" fill="#0000ff"/><rect x="22" y="1081" width="3" height="13" fill="#0000ff"/><rect x="29" y="1080" width="3" height="14" fill="#0000ff"/><rect x="37" y="1081" width="3" height="13" fill="#0000ff"/><rect x="44" y="1082" width="3" height="12" fill="#0000ff"/><rect x="51" y="1079" width="3" height="15" fill="#0000ff"/><rect x="59" y="1083" width="3" height="11" fill="#0000ff"/><rect x="66" y="1081" width="3" height="13" fill="#0000ff"/><rect x="74" y="1085" width="3" height="9" fill="#0000ff"/><rect x="81" y="1085" width="3" height="9" fill="#0000ff"/><rect x="88" y="1082" width="3" height="12" fill="#0000ff"/><rect x="96" y="1082" width="3" height="12" fill="#0000ff"/><rect x="103" y="1082" width="3" height="12" fill="#0000ff"/><rect x="111" y="1082" width="3" height="12" fill="#0000ff"/><rect x="118" y="1084" width="3" height="10" fill="#0000ff"/><rect x="125" y="1082" width="3" height="12" fill="#0000ff"/><rect x="133" y="1084" width="3" height="10" fill="#0000ff"/><rect x="140" y="1083" width="3" height="11" fill="#0000ff"/><rect x="148" y="1080" width="3" height="14" fill="#0000ff"/><rect x="155" y="1062" width="3" height="32" fill="#0000ff"/><rect x="162" y="1060" width="3" height="34" fill="#0000ff"/><rect x="170" y="1070" width="3" height="24" fill="#0000ff"/><rect x="177" y="1077" width="3" height="17" fill="#0000ff"/><rect x="185" y="1082" width="3" height="12" fill="#0000ff"/><rect x="192" y="1083" width="3" height="11" fill="#0000ff"/><rect x="199" y="1077" width="3" height="17" fill="#0000ff"/><rect x="207" y="1083" width="3" height="11" fill="#0000ff"/><rect x="214" y="1081" width="3" height="13" fill="#0000ff"/><rect x="222" y="1086" width="3" height="8" fill="#0000ff"/><rect x="229" y="1084" width="3" height="10" fill="#0000ff"/><rect x="236" y="1086" width="3" height="8" fill="#0000ff"/><rect x="244" y="1085" width="3" height="9" fill="#0000ff"/><rect x="251" y="1084" width="3" height="10" fill="#0000ff"/><rect x="259" y="1085" width="3" height="9" fill="#0000ff"/><rect x="266" y="1087" width="3" height="7" fill="#0000ff"/><rect x="273" y="1085" width="3" height="9" fill="#0000ff"/><rect x="281" y="1085" width="3" height="9" fill="#0000ff"/><rect x="288" y="1085" width="3" height="9" fill="#0000ff"/><rect x="296" y="1084" width="3" height="10" fill="#0000ff"/><rect x="303" y="1085" width="3" height="9" fill="#0000ff"/><rect x="310" y="1083" width="3" height="11" fill="#0000ff"/><rect x="318" y="1086" width="3" height="8" fill="#0000ff"/><rect x="325" y="1083" width="3" height="11" fill="#0000ff"/><rect x="333" y="1082" width="3" height="12" fill="#0000ff"/><rect x="340" y="1085" width="3" height="9" fill="#0000ff"/><rect x="347" y="1084" width="3" height="10" fill="#0000ff"/><rect x="355" y="1080" width="3" height="14" fill="#0000ff"/><rect x="362" y="1085" width="3" height="9" fill="#0000ff"/><rect x="370" y="1082" width="3" height="12" fill="#0000ff"/><rect x="377" y="1077" width="3" height="17" fill="#0000ff"/><rect x="384" y="1082" width="3" height="12" fill="#0000ff"/><rect x="392" y="1081" width="3" height="13" fill="#0000ff"/><rect x="399" y="1083" width="3" height="11" fill="#0000ff"/><rect x="407" y="1081" width="3" height="13" fill="#0000ff"/><rect x="414" y="1075" width="3" height="19" fill="#0000ff"/><rect x="421" y="1083" width="3" height="11" fill="#0000ff"/><rect x="429" y="1084" width="3" height="10" fill="#0000ff"/><rect x="436" y="1083" width="3" height="11" fill="#0000ff"/><rect x="444" y="1080" width="3" height="14" fill="#0000ff"/><rect x="451" y="1081" width="3" height="13" fill="#0000ff"/><rect x="458" y="1080" width="3" height="14" fill="#0000ff"/><rect x="466" y="1083" width="3" height="11" fill="#0000ff"/><rect x="473" y="1083" width="3" height="11" fill="#0000ff"/><rect x="481" y="1081" width="3" height="13" fill="#0000ff"/><rect x="488" y="1079" width="3" height="15" fill="#0000ff"/><rect x="496" y="1082" width="3" height="12" fill="#0000ff"/><rect x="503" y="1082" width="3" height="12" fill="#0000ff"/><rect x="510" y="1080" width="3" height="14" fill="#0000ff"/><rect x="518" y="1084" width="3" height="10" fill="#0000ff"/><rect x="525" y="1085" width="3" height="9" fill="#0000ff"/><rect x="533" y="1083" width="3" height="11" fill="#0000ff"/><rect x="540" y="1081" width="3" height="13" fill="#0000ff"/><rect x="547" y="1085" width="3" height="9" fill="#0000ff"/><rect x="555" y="1081" width="3" height="13" fill="#0000ff"/><rect x="562" y="1085" width="3" height="9" fill="#0000ff"/><rect x="570" y="1083" width="3" height="11" fill="#0000ff"/><rect x="577" y="1075" width="3" height="19" fill="#0000ff"/><rect x="584" y="1078" width="3" height="16" fill="#0000ff"/><rect x="592" y="1078" width="3" height="16" fill="#0000ff"/><rect x="599" y="1082" width="3" height="12" fill="#0000ff"/><rect x="607" y="1078" width="3" height="16" fill="#0000ff"/><rect x="614" y="1079" width="3" height="15" fill="#0000ff"/><rect x="621" y="1079" width="3" height="15" fill="#0000ff"/><rect x="629" y="1069" width="3" height="25" fill="#0000ff"/><rect x="636" y="1056" width="3" height="38" fill="#0000ff"/><rect x="644" y="1072" width="3" height="22" fill="#0000ff"/><rect x="651" y="1072" width="3" height="22" fill="#0000ff"/><rect x="658" y="1076" width="3" height="18" fill="#0000ff"/><rect x="666" y="1076" width="3" height="18" fill="#0000ff"/><rect x="673" y="1074" width="3" height="20" fill="#0000ff"/><rect x="681" y="1079" width="3" height="15" fill="#0000ff"/><rect x="688" y="1081" width="3" height="13" fill="#0000ff"/><rect x="695" y="1070" width="3" height="24" fill="#0000ff"/><rect x="703" y="1052" width="3" height="42" fill="#0000ff"/><rect x="710" y="1072" width="3" height="22" fill="#0000ff"/><rect x="718" y="1061" width="3" height="33" fill="#0000ff"/><rect x="725" y="1072" width="3" height="22" fill="#0000ff"/><rect x="732" y="1080" width="3" height="14" fill="#0000ff"/><rect x="740" y="1082" width="3" height="12" fill="#0000ff"/><rect x="747" y="1079" width="3" height="15" fill="#0000ff"/><rect x="755" y="1081" width="3" height="13" fill="#0000ff"/><rect x="762" y="1079" width="3" height="15" fill="#0000ff"/><rect x="769" y="1080" width="3" height="14" fill="#0000ff"/><rect x="777" y="1088" width="3" height="6" fill="#0000ff"/><rect x="784" y="1074" width="3" height="20" fill="#0000ff"/><rect x="792" y="1079" width="3" height="15" fill="#0000ff"/><rect x="799" y="1072" width="3" height="22" fill="#0000ff"/><rect x="806" y="1067" width="3" height="27" fill="#0000ff"/><rect x="814" y="1080" width="3" height="14" fill="#0000ff"/><rect x="821" y="1081" width="3" height="13" fill="#0000ff"/><rect x="829" y="1078" width="3" height="16" fill="#0000ff"/><rect x="836" y="1078" width="3" height="16" fill="#0000ff"/><rect x="843" y="1080" width="3" height="14" fill="#0000ff"/><rect x="851" y="1077" width="3" height="17" fill="#0000ff"/><rect x="858" y="1075" width="3" height="19" fill="#0000ff"/><rect x="866" y="1074" width="3" height="20" fill="#0000ff"/><rect x="873" y="1078" width="3" height="16" fill="#0000ff"/><rect x="880" y="1079" width="3" height="15" fill="#0000ff"/><rect x="888" y="1072" width="3" height="22" fill="#0000ff"/><rect x="895" y="1082" width="3" height="12" fill="#0000ff"/><rect x="903" y="1085" width="3" height="9" fill="#0000ff"/><rect x="910" y="1082" width="3" height="12" fill="#0000ff"/><rect x="917" y="1084" width="3" height="10" fill="#0000ff"/><rect x="925" y="1087" width="3" height="7" fill="#0000ff"/><rect x="932" y="1086" width="3" height="8" fill="#0000ff"/><rect x="940" y="1083" width="3" height="11" fill="#0000ff"/><rect x="947" y="1086" width="3" height="8" fill="#0000ff"/><rect x="954" y="1078" width="3" height="16" fill="#0000ff"/><rect x="962" y="1079" width="3" height="15" fill="#0000ff"/><rect x="969" y="1084" width="3" height="10" fill="#0000ff"/><rect x="977" y="1081" width="3" height="13" fill="#0000ff"/><rect x="984" y="1079" width="3" height="15" fill="#0000ff"/><rect x="992" y="1082" width="3" height="12" fill="#0000ff"/><rect x="999" y="1083" width="3" height="11" fill="#0000ff"/><rect x="1006" y="1084" width="3" height="10" fill="#0000ff"/><rect x="1014" y="1081" width="3" height="13" fill="#0000ff"/><rect x="1021" y="1083" width="3" height="11" fill="#0000ff"/><rect x="1029" y="1081" width="3" height="13" fill="#0000ff"/><rect x="1036" y="1082" width="3" height="12" fill="#0000ff"/><rect x="1043" y="1085" width="3" height="9" fill="#0000ff"/><rect x="1051" y="1078" width="3" height="16" fill="#0000ff"/><rect x="1058" y="1076" width="3" height="18" fill="#0000ff"/><rect x="1066" y="1080" width="3" height="14" fill="#0000ff"/><rect x="1073" y="1079" width="3" height="15" fill="#0000ff"/><rect x="1080" y="1067" width="3" height="27" fill="#0000ff"/><rect x="1088" y="1067" width="3" height="27" fill="#0000ff"/><rect x="1095" y="1065" width="3" height="29" fill="#0000ff"/><rect x="1103" y="1074" width="3" height="20" fill="#0000ff"/><rect x="1110" y="1075" width="3" height="19" fill="#0000ff"/><rect x="1117" y="1080" width="3" height="14" fill="#0000ff"/><rect x="1125" y="1080" width="3" height="14" fill="#0000ff"/><rect x="1132" y="1083" width="3" height="11" fill="#0000ff"/><rect x="1140" y="1082" width="3" height="12" fill="#0000ff"/><rect x="1147" y="1083" width="3" height="11" fill="#0000ff"/><rect x="1154" y="1084" width="3" height="10" fill="#0000ff"/><rect x="1162" y="1083" width="3" height="11" fill="#0000ff"/><rect x="1169" y="1082" width="3" height="12" fill="#0000ff"/><rect x="1177" y="1084" width="3" height="10" fill="#0000ff"/><rect x="1184" y="1081" width="3" height="13" fill="#0000ff"/><rect x="1191" y="1082" width="3" height="12" fill="#0000ff"/><rect x="1199" y="1079" width="3" height="15" fill="#0000ff"/><rect x="1206" y="1082" width="3" height="12" fill="#0000ff"/><rect x="1214" y="1084" width="3" height="10" fill="#0000ff"/><rect x="1221" y="1080" width="3" height="14" fill="#0000ff"/><rect x="1228" y="1081" width="3" height="13" fill="#0000ff"/><rect x="1236" y="1083" width="3" height="11" fill="#0000ff"/><rect x="1243" y="1073" width="3" height="21" fill="#0000ff"/><rect x="1251" y="1080" width="3" height="14" fill="#0000ff"/><rect x="1258" y="1085" width="3" height="9" fill="#0000ff"/><rect x="1265" y="1085" width="3" height="9" fill="#0000ff"/><rect x="1273" y="1083" width="3" height="11" fill="#0000ff"/><rect x="1280" y="1084" width="3" height="10" fill="#0000ff"/><rect x="1288" y="1084" width="3" height="10" fill="#0000ff"/><rect x="1295" y="1082" width="3" height="12" fill="#0000ff"/><rect x="1302" y="1078" width="3" height="16" fill="#0000ff"/><rect x="1310" y="1082" width="3" height="12" fill="#0000ff"/><rect x="1317" y="1086" width="3" height="8" fill="#0000ff"/><rect x="1325" y="1081" width="3" height="13" fill="#0000ff"/><rect x="1332" y="1084" width="3" height="10" fill="#0000ff"/><rect x="1339" y="1078" width="3" height="16" fill="#0000ff"/><rect x="1347" y="1082" width="3" height="12" fill="#0000ff"/><rect x="1354" y="1072" width="3" height="22" fill="#0000ff"/><rect x="1362" y="1081" width="3" height="13" fill="#0000ff"/><rect x="1369" y="1063" width="3" height="31" fill="#0000ff"/><rect x="1376" y="1076" width="3" height="18" fill="#0000ff"/><rect x="1384" y="1076" width="3" height="18" fill="#0000ff"/><rect x="1391" y="1079" width="3" height="15" fill="#0000ff"/><rect x="1399" y="1077" width="3" height="17" fill="#0000ff"/><rect x="1406" y="1084" width="3" height="10" fill="#0000ff"/><rect x="1413" y="1081" width="3" height="13" fill="#0000ff"/><rect x="1421" y="1078" width="3" height="16" fill="#0000ff"/><rect x="1428" y="1084" width="3" height="10" fill="#0000ff"/><rect x="1436" y="1079" width="3" height="15" fill="#0000ff"/><rect x="1443" y="1082" width="3" height="12" fill="#0000ff"/><rect x="1450" y="1084" width="3" height="10" fill="#0000ff"/><rect x="1458" y="1084" width="3" height="10" fill="#0000ff"/><rect x="1465" y="1084" width="3" height="10" fill="#0000ff"/><rect x="1473" y="1085" width="3" height="9" fill="#0000ff"/><rect x="1480" y="1090" width="3" height="4" fill="#0000ff"/><rect x="1514" y="91" width="1.4" height="1004" fill="#fff" shape-rendering="auto"/><rect x="1" y="1093.5" width="1575" height="1.5" fill="#fff" shape-rendering="auto"/><rect x="1516" y="118" width="5" height="1" fill="#fff"/><rect x="1516" y="135" width="3" height="1" fill="#fff"/><rect x="1516" y="152" width="5" height="1" fill="#fff"/><rect x="1516" y="169" width="3" height="1" fill="#fff"/><rect x="1516" y="187" width="5" height="1" fill="#fff"/><rect x="1516" y="204" width="3" height="1" fill="#fff"/><rect x="1516" y="221" width="5" height="1" fill="#fff"/><rect x="1516" y="238" width="3" height="1" fill="#fff"/><rect x="1516" y="256" width="5" height="1" fill="#fff"/><rect x="1516" y="273" width="3" height="1" fill="#fff"/><rect x="1516" y="290" width="5" height="1" fill="#fff"/><rect x="1516" y="307" width="3" height="1" fill="#fff"/><rect x="1516" y="324" width="5" height="1" fill="#fff"/><rect x="1516" y="341" width="3" height="1" fill="#fff"/><rect x="1516" y="359" width="5" height="1" fill="#fff"/><rect x="1516" y="376" width="3" height="1" fill="#fff"/><rect x="1516" y="393" width="5" height="1" fill="#fff"/><rect x="1516" y="410" width="3" height="1" fill="#fff"/><rect x="1516" y="428" width="5" height="1" fill="#fff"/><rect x="1516" y="445" width="3" height="1" fill="#fff"/><rect x="1516" y="462" width="5" height="1" fill="#fff"/><rect x="1516" y="479" width="3" height="1" fill="#fff"/><rect x="1516" y="496" width="5" height="1" fill="#fff"/><rect x="1516" y="513" width="3" height="1" fill="#fff"/><rect x="1516" y="531" width="5" height="1" fill="#fff"/><rect x="1516" y="548" width="3" height="1" fill="#fff"/><rect x="1516" y="565" width="5" height="1" fill="#fff"/><rect x="1516" y="582" width="3" height="1" fill="#fff"/><rect x="1516" y="600" width="5" height="1" fill="#fff"/><rect x="1516" y="617" width="3" height="1" fill="#fff"/><rect x="1516" y="634" width="5" height="1" fill="#fff"/><rect x="1516" y="651" width="3" height="1" fill="#fff"/><rect x="1516" y="668" width="5" height="1" fill="#fff"/><rect x="1516" y="685" width="3" height="1" fill="#fff"/><rect x="1516" y="703" width="5" height="1" fill="#fff"/><rect x="1516" y="720" width="3" height="1" fill="#fff"/><rect x="1516" y="737" width="5" height="1" fill="#fff"/><rect x="1516" y="754" width="3" height="1" fill="#fff"/><rect x="1516" y="772" width="5" height="1" fill="#fff"/><rect x="1516" y="789" width="3" height="1" fill="#fff"/><rect x="1516" y="806" width="5" height="1" fill="#fff"/><rect x="1516" y="823" width="3" height="1" fill="#fff"/><rect x="1516" y="841" width="5" height="1" fill="#fff"/><rect x="1516" y="858" width="3" height="1" fill="#fff"/><rect x="1516" y="875" width="5" height="1" fill="#fff"/><rect x="1516" y="892" width="3" height="1" fill="#fff"/><rect x="1516" y="910" width="5" height="1" fill="#fff"/><rect x="1516" y="101" width="3" height="1" fill="#fff"/><rect x="1516" y="1005" width="3" height="1" fill="#fff"/><rect x="1516" y="1049" width="3" height="1" fill="#fff"/><rect x="1516" y="953" width="5" height="1" fill="#fff"/><rect x="1516" y="971" width="3" height="1" fill="#fff"/><rect x="1516" y="988" width="5" height="1" fill="#fff"/><rect x="1516" y="1022" width="5" height="1" fill="#fff"/><rect x="1516" y="1030" width="3" height="1" fill="#fff"/><rect x="1516" y="1040" width="5" height="1" fill="#fff"/><rect x="1516" y="1064" width="5" height="1" fill="#fff"/><rect x="1516" y="1071" width="3" height="1" fill="#fff"/><rect x="1516" y="1078" width="5" height="1" fill="#fff"/><rect x="1516" y="1085" width="3" height="1" fill="#fff"/><rect x="1516" y="917" width="3" height="1" fill="#fff"/><rect x="23" y="1095" width="1" height="19" fill="#fff"/><rect x="171" y="1095" width="1" height="19" fill="#fff"/><rect x="341" y="1095" width="1" height="19" fill="#fff"/><rect x="497" y="1095" width="1" height="19" fill="#fff"/><rect x="652" y="1095" width="1" height="19" fill="#fff"/><rect x="807" y="1095" width="1" height="19" fill="#fff"/><rect x="963" y="1095" width="1" height="19" fill="#fff"/><rect x="1111" y="1095" width="1" height="19" fill="#fff"/><rect x="1252" y="1095" width="1" height="19" fill="#fff"/><rect x="1422" y="1095" width="1" height="19" fill="#fff"/><rect x="0" y="91" width="1" height="1024" fill="#000"/><rect x="1516" y="243" width="84" height="15" fill="#3a6a00"/></svg><span class="t" style="left:1558.00px;top:111.25px;height:15px;line-height:15px;font-size:10.67px;color:#fff;transform:translateX(-50%);">847.50</span><span class="t" style="left:1558.00px;top:145.25px;height:15px;line-height:15px;font-size:10.67px;color:#fff;transform:translateX(-50%);">840.00</span><span class="t" style="left:1558.00px;top:180.25px;height:15px;line-height:15px;font-size:10.67px;color:#fff;transform:translateX(-50%);">832.50</span><span class="t" style="left:1558.00px;top:214.25px;height:15px;line-height:15px;font-size:10.67px;color:#fff;transform:translateX(-50%);">825.00</span><span class="t" style="left:1558.00px;top:283.25px;height:15px;line-height:15px;font-size:10.67px;color:#fff;transform:translateX(-50%);">810.00</span><span class="t" style="left:1558.00px;top:317.25px;height:15px;line-height:15px;font-size:10.67px;color:#fff;transform:translateX(-50%);">802.50</span><span class="t" style="left:1558.00px;top:352.25px;height:15px;line-height:15px;font-size:10.67px;color:#fff;transform:translateX(-50%);">795.00</span><span class="t" style="left:1558.00px;top:386.25px;height:15px;line-height:15px;font-size:10.67px;color:#fff;transform:translateX(-50%);">787.50</span><span class="t" style="left:1558.00px;top:421.25px;height:15px;line-height:15px;font-size:10.67px;color:#fff;transform:translateX(-50%);">780.00</span><span class="t" style="left:1558.00px;top:455.25px;height:15px;line-height:15px;font-size:10.67px;color:#fff;transform:translateX(-50%);">772.50</span><span class="t" style="left:1558.00px;top:489.25px;height:15px;line-height:15px;font-size:10.67px;color:#fff;transform:translateX(-50%);">765.00</span><span class="t" style="left:1558.00px;top:524.25px;height:15px;line-height:15px;font-size:10.67px;color:#fff;transform:translateX(-50%);">757.50</span><span class="t" style="left:1558.00px;top:558.25px;height:15px;line-height:15px;font-size:10.67px;color:#fff;transform:translateX(-50%);">750.00</span><span class="t" style="left:1558.00px;top:593.25px;height:15px;line-height:15px;font-size:10.67px;color:#fff;transform:translateX(-50%);">742.50</span><span class="t" style="left:1558.00px;top:627.25px;height:15px;line-height:15px;font-size:10.67px;color:#fff;transform:translateX(-50%);">735.00</span><span class="t" style="left:1558.00px;top:661.25px;height:15px;line-height:15px;font-size:10.67px;color:#fff;transform:translateX(-50%);">727.50</span><span class="t" style="left:1558.00px;top:696.25px;height:15px;line-height:15px;font-size:10.67px;color:#fff;transform:translateX(-50%);">720.00</span><span class="t" style="left:1558.00px;top:730.25px;height:15px;line-height:15px;font-size:10.67px;color:#fff;transform:translateX(-50%);">712.50</span><span class="t" style="left:1558.00px;top:765.25px;height:15px;line-height:15px;font-size:10.67px;color:#fff;transform:translateX(-50%);">705.00</span><span class="t" style="left:1558.00px;top:799.25px;height:15px;line-height:15px;font-size:10.67px;color:#fff;transform:translateX(-50%);">697.50</span><span class="t" style="left:1558.00px;top:834.25px;height:15px;line-height:15px;font-size:10.67px;color:#fff;transform:translateX(-50%);">690.00</span><span class="t" style="left:1558.00px;top:868.25px;height:15px;line-height:15px;font-size:10.67px;color:#fff;transform:translateX(-50%);">682.50</span><span class="t" style="left:1558.00px;top:902.25px;height:15px;line-height:15px;font-size:10.67px;color:#fff;transform:translateX(-50%);">675.00</span><span class="t" style="left:1558.00px;top:946.25px;height:15px;line-height:15px;font-size:10.67px;color:#fff;transform:translateX(-50%);">600.00</span><span class="t" style="left:1558.00px;top:981.25px;height:15px;line-height:15px;font-size:10.67px;color:#fff;transform:translateX(-50%);">540.00</span><span class="t" style="left:1558.00px;top:1015.25px;height:15px;line-height:15px;font-size:10.67px;color:#fff;transform:translateX(-50%);">60.00</span><span class="t" style="left:1558.00px;top:1033.25px;height:15px;line-height:15px;font-size:10.67px;color:#fff;transform:translateX(-50%);">40.00</span><span class="t" style="left:1537.30px;top:1057.25px;height:15px;line-height:15px;font-size:10.67px;color:#fff;">3200000</span><span class="t" style="left:1537.30px;top:1071.25px;height:15px;line-height:15px;font-size:10.67px;color:#fff;">1600000</span><span class="t" style="left:1516.00px;top:243.25px;height:15px;line-height:15px;font-size:10.67px;color:#d9a6e6;">820.22</span><span class="t" style="left:26.30px;top:1097.25px;height:15px;line-height:15px;font-size:10.67px;color:#fff;">July</span><span class="t" style="left:174.30px;top:1097.25px;height:15px;line-height:15px;font-size:10.67px;color:#fff;">August</span><span class="t" style="left:344.30px;top:1097.25px;height:15px;line-height:15px;font-size:10.67px;color:#fff;">September</span><span class="t" style="left:500.30px;top:1097.25px;height:15px;line-height:15px;font-size:10.67px;color:#fff;">October</span><span class="t" style="left:655.30px;top:1097.25px;height:15px;line-height:15px;font-size:10.67px;color:#fff;">November</span><span class="t" style="left:810.30px;top:1097.25px;height:15px;line-height:15px;font-size:10.67px;color:#fff;">December</span><span class="t" style="left:966.30px;top:1097.25px;height:15px;line-height:15px;font-size:10.67px;color:#fff;">2017 Jan</span><span class="t" style="left:1114.30px;top:1097.25px;height:15px;line-height:15px;font-size:10.67px;color:#fff;">February</span><span class="t" style="left:1255.30px;top:1097.25px;height:15px;line-height:15px;font-size:10.67px;color:#fff;">March</span><span class="t" style="left:1425.30px;top:1097.25px;height:15px;line-height:15px;font-size:10.67px;color:#fff;">April</span><span class="t" style="left:2.60px;top:91.25px;height:15px;line-height:15px;font-size:10.67px;color:#3c8a00;letter-spacing:-0.499px;">GOOG</span><span class="t" style="left:2.60px;top:919.25px;height:15px;line-height:15px;font-size:10.67px;color:#e80000;letter-spacing:-0.413px;">NEURAL NETWORK</span><span class="t" style="left:2.60px;top:1006.25px;height:15px;line-height:15px;font-size:10.67px;color:#e80000;letter-spacing:-0.499px;">RELATIVE STRENGTH INDEXI</span><span class="t" style="left:2.00px;top:1050.25px;height:15px;line-height:15px;font-size:10.67px;color:#0000f0;letter-spacing:-0.366px;">VOLUME = 1</span><svg class="a" style="left:1570px;top:1050px" width="30" height="65" viewBox="1570 1050 30 65"><defs><linearGradient id="tv" x1="0" y1="0" x2="0" y2="1"><stop offset="0" stop-color="#08a8f6"/><stop offset="1" stop-color="#1285e6"/></linearGradient></defs><path d="M1600 1057 H1580 Q1575.5 1057 1575.5 1061.5 V1091 Q1575.5 1095 1579 1097 L1600 1109.6 Z" fill="#fff"/><rect x="1579" y="1063" width="20" height="20" fill="url(#tv)"/><circle cx="1589.1" cy="1072.9" r="8.9" fill="#fff"/><path d="M1582 1073 l4.6 -3.4 v2.2 h5 v-2.2 l4.6 3.4 l-4.6 3.4 v-2.2 h-5 v2.2 z" fill="#1a8ae8"/></svg><div class="a" style="left:0px;top:0px;width:1600px;height:23px;background:#fff;"></div><svg class="a" style="left:2px;top:3px" width="16" height="16" viewBox="0 0 16 16"><rect width="16" height="16" fill="#000"/><path d="M3.6 0 C4.6 2 6.6 6 6.6 16 L2.2 16 C3.2 10 3 4 3.6 0 Z" fill="#1838b8"/><path d="M3.4 0.5 C3 5 3.2 10 2.4 16" stroke="#18a8f0" stroke-width="1" fill="none"/><path d="M5.6 4 L5.9 6" stroke="#8a7ad8" stroke-width="0.9"/><path d="M0 12.4 L1.4 11 L2.8 12.4 L4.2 10.8 L5.6 12.4 L7 10.6 L8.2 12.6 L9.4 9.8 L10.6 12.8 L11.8 10.6 L13 13 L14.4 10.4 L16 11" stroke="#22d8ff" stroke-width="1.2" fill="none"/></svg><span class="t" style="left:23.00px;top:4.25px;height:17px;line-height:17px;font-size:12px;color:#999;letter-spacing:-0.081px;">WhenToTrade Charting</span><svg class="a" style="left:1470px;top:0" width="130" height="23" viewBox="0 0 130 23" fill="none" stroke="#8a8a8a" stroke-width="1" shape-rendering="crispEdges"><path d="M8.5 10.5 H20"/><rect x="54.5" y="7.5" width="8" height="8"/><path d="M56.5 7.5 V5.5 H64.5 V13.5 H62.5"/><g shape-rendering="auto"><path d="M99.5 5 L110.5 16 M110.5 5 L99.5 16"/></g></svg><div class="a" style="left:0px;top:23px;width:1600px;height:63px;background:linear-gradient(to right,#d0d0d0,#e6e6e6);"></div><div class="a" style="left:3px;top:86px;width:1597px;height:1px;background:#000;"></div><div class="a" style="left:0px;top:86px;width:3px;height:1px;background:#d0d0d0;"></div><div class="a" style="left:0px;top:87px;width:1600px;height:1px;background:#e6e6e6;"></div><div class="a" style="left:0px;top:88px;width:1600px;height:1px;background:#000;"></div><div class="a" style="left:0px;top:89px;width:1600px;height:2px;background:#6a6a6a;"></div><div class="a" style="left:4px;top:29px;width:2px;height:2px;background:#555;"></div><div class="a" style="left:5px;top:30px;width:2px;height:2px;background:#fff;"></div><div class="a" style="left:4px;top:33px;width:2px;height:2px;background:#555;"></div><div class="a" style="left:5px;top:34px;width:2px;height:2px;background:#fff;"></div><div class="a" style="left:4px;top:37px;width:2px;height:2px;background:#555;"></div><div class="a" style="left:5px;top:38px;width:2px;height:2px;background:#fff;"></div><div class="a" style="left:4px;top:41px;width:2px;height:2px;background:#555;"></div><div class="a" style="left:5px;top:42px;width:2px;height:2px;background:#fff;"></div><div class="a" style="left:4px;top:45px;width:2px;height:2px;background:#555;"></div><div class="a" style="left:5px;top:46px;width:2px;height:2px;background:#fff;"></div><div class="a" style="left:4px;top:58px;width:2px;height:2px;background:#555;"></div><div class="a" style="left:5px;top:59px;width:2px;height:2px;background:#fff;"></div><div class="a" style="left:4px;top:62px;width:2px;height:2px;background:#555;"></div><div class="a" style="left:5px;top:63px;width:2px;height:2px;background:#fff;"></div><div class="a" style="left:4px;top:66px;width:2px;height:2px;background:#555;"></div><div class="a" style="left:5px;top:67px;width:2px;height:2px;background:#fff;"></div><div class="a" style="left:4px;top:70px;width:2px;height:2px;background:#555;"></div><div class="a" style="left:5px;top:71px;width:2px;height:2px;background:#fff;"></div><div class="a" style="left:4px;top:74px;width:2px;height:2px;background:#555;"></div><div class="a" style="left:5px;top:75px;width:2px;height:2px;background:#fff;"></div><div class="a" style="left:4px;top:78px;width:2px;height:2px;background:#555;"></div><div class="a" style="left:5px;top:79px;width:2px;height:2px;background:#fff;"></div><div class="a" style="left:292px;top:26px;width:146px;height:25px;background:#b5d7f3;box-sizing:border-box;border:1px solid #f0cf6e;"></div><span class="t" style="left:19.00px;top:31.25px;height:17px;line-height:17px;font-size:12px;color:#000;letter-spacing:-0.235px;">FILE</span><span class="t" style="left:60.00px;top:31.25px;height:17px;line-height:17px;font-size:12px;color:#000;letter-spacing:-0.042px;">VIEW</span><span class="t" style="left:106.00px;top:31.25px;height:17px;line-height:17px;font-size:12px;color:#000;letter-spacing:0.177px;">CHART</span><span class="t" style="left:163.00px;top:31.25px;height:17px;line-height:17px;font-size:12px;color:#000;letter-spacing:0.136px;">DRAWING</span><span class="t" style="left:236.00px;top:31.25px;height:17px;line-height:17px;font-size:12px;color:#000;letter-spacing:0.164px;">CYCLES</span><span class="t" style="left:302.00px;top:31.25px;height:17px;line-height:17px;font-size:12px;color:#000;letter-spacing:-0.050px;">GENETIC ALGORITHM</span><span class="t" style="left:446.00px;top:31.25px;height:17px;line-height:17px;font-size:12px;color:#000;letter-spacing:-0.038px;">SCRIPTING</span><span class="t" style="left:527.00px;top:31.25px;height:17px;line-height:17px;font-size:12px;color:#000;letter-spacing:-0.192px;">TOOLS</span><span class="t" style="left:583.00px;top:31.25px;height:17px;line-height:17px;font-size:12px;color:#000;letter-spacing:0.256px;">REPLAY</span><span class="t" style="left:645.00px;top:31.25px;height:17px;line-height:17px;font-size:12px;color:#000;letter-spacing:0.163px;">HELP</span><span class="t" style="left:692.00px;top:31.25px;height:17px;line-height:17px;font-size:12px;color:#000;letter-spacing:0.106px;">Artificial Intelligence (BETA)</span><span class="t" style="left:859.00px;top:31.25px;height:17px;line-height:17px;font-size:12px;color:#000;letter-spacing:0.184px;">Tools (BETA)</span><svg class="a" style="left:0;top:0" width="800" height="90" viewBox="0 0 800 90"><rect x="75" y="57" width="1" height="25" fill="#3a3a3a" shape-rendering="crispEdges"/><rect x="231" y="57" width="1" height="25" fill="#3a3a3a" shape-rendering="crispEdges"/><rect x="297" y="57" width="1" height="25" fill="#3a3a3a" shape-rendering="crispEdges"/><rect x="333" y="57" width="1" height="25" fill="#3a3a3a" shape-rendering="crispEdges"/><rect x="369" y="57" width="1" height="25" fill="#3a3a3a" shape-rendering="crispEdges"/><rect x="435" y="57" width="1" height="25" fill="#3a3a3a" shape-rendering="crispEdges"/><rect x="471" y="57" width="1" height="25" fill="#3a3a3a" shape-rendering="crispEdges"/><rect x="597" y="57" width="1" height="25" fill="#3a3a3a" shape-rendering="crispEdges"/><rect x="633" y="57" width="1" height="25" fill="#3a3a3a" shape-rendering="crispEdges"/><rect x="669" y="57" width="1" height="25" fill="#3a3a3a" shape-rendering="crispEdges"/><rect x="18.4" y="62" width="19.8" height="16.2" rx="1.2" fill="none" stroke="#2b2b2b" stroke-width="1.4"/><path d="M17.7 65.6 V62.6 Q17.7 61.1 19.2 61.1 H37.4 Q38.9 61.1 38.9 62.6 V65.6 Z" fill="#2b2b2b"/><polygon points="28.10,67.30 29.63,70.40 33.05,70.89 30.57,73.30 31.16,76.71 28.10,75.10 25.04,76.71 25.63,73.30 23.15,70.89 26.57,70.40" fill="#2e9bd6" stroke="#2e9bd6" stroke-width="0.8" stroke-linejoin="round"/><path d="M51.8 76.3 L61.6 67.2" stroke="#2b2b2b" stroke-width="4.2" stroke-linecap="round"/><circle cx="51.4" cy="76.6" r="3.1" fill="#2b2b2b"/><circle cx="51.4" cy="76.6" r="1.25" fill="#e4e4e4"/><circle cx="62.9" cy="65.9" r="5.5" fill="#2b2b2b"/><circle cx="64.3" cy="64.5" r="2.3" fill="#d2d2d2"/><path d="M64.3 64.5 L70 58.8" stroke="#d2d2d2" stroke-width="4.3"/><circle cx="90" cy="66.3" r="6.8" fill="none" stroke="#2b2b2b" stroke-width="1.2"/><path d="M96.2 72.5 L103.4 79.7" stroke="#2b2b2b" stroke-width="3.6"/><text x="90" y="69.3" font-family="Liberation Sans,sans-serif" font-size="8" fill="#2e9bd6" text-anchor="middle">1:1</text><circle cx="120" cy="66.3" r="6.8" fill="none" stroke="#2b2b2b" stroke-width="1.2"/><path d="M126.2 72.5 L133.4 79.7" stroke="#2b2b2b" stroke-width="3.6"/><rect x="115.5" y="65" width="9" height="2.6" fill="#2e9bd6"/><circle cx="150" cy="66.3" r="6.8" fill="none" stroke="#2b2b2b" stroke-width="1.2"/><path d="M156.2 72.5 L163.4 79.7" stroke="#2b2b2b" stroke-width="3.6"/><rect x="145.5" y="65" width="9" height="2.6" fill="#2e9bd6"/><rect x="148.7" y="61.8" width="2.6" height="9" fill="#2e9bd6"/><circle cx="180.7" cy="66.3" r="7.3" fill="none" stroke="#2b2b2b" stroke-width="1.2"/><path d="M187.3 72.9 L194.5 80.1" stroke="#2e9bd6" stroke-width="3.6"/><rect x="205" y="64" width="1.3" height="12" fill="#2b2b2b"/><rect x="222.3" y="64" width="1.3" height="12" fill="#2b2b2b"/><path d="M207 70 l3 -2 v4 z M221.5 70 l-3 -2 v4 z" fill="#2e9bd6"/><path transform="translate(240.5,60.5)" d="M9 0 L0 9.2 L9 18.4 L12 15.4 L6 9.2 L12 3 Z M17.4 0 L8.4 9.2 L17.4 18.4 L20.4 15.4 L14.4 9.2 L20.4 3 Z" fill="#2b2b2b"/><path transform="translate(290.4,60.5) scale(-1,1)" d="M9 0 L0 9.2 L9 18.4 L12 15.4 L6 9.2 L12 3 Z M17.4 0 L8.4 9.2 L17.4 18.4 L20.4 15.4 L14.4 9.2 L20.4 3 Z" fill="#2b2b2b"/><rect x="307.6" y="61.9" width="16.5" height="16.3" fill="none" stroke="#2b2b2b" stroke-width="1.5" stroke-dasharray="2.4 1.5" stroke-dashoffset="1.2"/><path d="M314.46 65.36 A4.8 4.8 0 0 1 319.63 67.25" fill="none" stroke="#2e9bd6" stroke-width="2.6"/><path d="M321.84 65.70 L317.42 68.80 L321.41 69.79 Z" fill="#2e9bd6"/><path d="M320.34 71.24 A4.8 4.8 0 0 1 316.12 74.78" fill="none" stroke="#2e9bd6" stroke-width="2.6"/><path d="M316.35 77.47 L315.88 72.09 L313.03 75.05 Z" fill="#2e9bd6"/><path d="M312.31 73.39 A4.8 4.8 0 0 1 311.35 67.97" fill="none" stroke="#2e9bd6" stroke-width="2.6"/><path d="M308.90 66.83 L313.80 69.11 L312.66 65.16 Z" fill="#2e9bd6"/><rect x="343.9" y="61.9" width="16.5" height="16.3" fill="none" stroke="#2b2b2b" stroke-width="1.5" stroke-dasharray="2.4 1.5" stroke-dashoffset="1.2"/><path d="M348.4 66 L355.8 73.9 M355.8 66 L348.4 73.9" stroke="#2e9bd6" stroke-width="2.9"/><rect x="382.8" y="62.4" width="10.4" height="17.2" rx="1.2" fill="none" stroke="#2b2b2b" stroke-width="1.5"/><rect x="385.3" y="60.3" width="5.4" height="2.2" rx="0.6" fill="#2b2b2b"/><rect x="384.40000000000003" y="64.3" width="7.2" height="1.7" fill="#2e9bd6"/><rect x="384.40000000000003" y="66.7" width="7.2" height="1.7" fill="#2e9bd6"/><rect x="384.40000000000003" y="69.1" width="7.2" height="1.7" fill="#2e9bd6"/><rect x="384.40000000000003" y="71.5" width="7.2" height="1.7" fill="#2e9bd6"/><rect x="384.40000000000003" y="73.9" width="7.2" height="1.7" fill="#2e9bd6"/><rect x="384.40000000000003" y="76.3" width="7.2" height="1.7" fill="#2e9bd6"/><rect x="412.8" y="62.4" width="10.4" height="17.2" rx="1.2" fill="none" stroke="#2b2b2b" stroke-width="1.5"/><rect x="415.3" y="60.3" width="5.4" height="2.2" rx="0.6" fill="#2b2b2b"/><rect x="414.70000000000005" y="76" width="6.8" height="2" fill="#2e9bd6"/><rect x="451" y="70" width="5" height="1" fill="#111" shape-rendering="crispEdges"/><rect x="453" y="68" width="1" height="5" fill="#111" shape-rendering="crispEdges"/><rect x="488.4" y="63" width="3.8" height="17.4" fill="#2b2b2b"/><path d="M484.9 69.4 L490.3 63 L495.7 69.4" fill="none" stroke="#2b2b2b" stroke-width="4.2" stroke-linejoin="miter" stroke-miterlimit="6"/><rect x="518.7" y="59.7" width="3.8" height="17.4" fill="#2b2b2b"/><path d="M515.2 70.8 L520.6 77.2 L526 70.8" fill="none" stroke="#2b2b2b" stroke-width="4.2" stroke-linejoin="miter" stroke-miterlimit="6"/><path d="M545.4 74.8 L554.9 65.4" stroke="#222" stroke-width="1.5"/><circle cx="544" cy="76.1" r="1.5" fill="#cfe6f2" stroke="#6bb8e0" stroke-width="0.8"/><circle cx="556.2" cy="64.2" r="1.5" fill="#cfe6f2" stroke="#6bb8e0" stroke-width="0.8"/><text x="569.3" y="74.3" font-family="Liberation Sans,sans-serif" font-size="21" font-weight="bold" fill="#2e9bd6">A</text><text x="576.8" y="80.8" font-family="Liberation Serif,serif" font-size="22" font-style="italic" font-weight="bold" fill="#1a1a1a">A</text><g transform="translate(617,69.6)"><path d="M-6.4 5.6 A8.5 8.5 0 1 0 -8.3 -1.8" fill="none" stroke="#2b2b2b" stroke-width="3"/><path d="M-12 -3.8 L-4.4 -2.2 L-9.6 3.8 Z" fill="#2b2b2b"/><path d="M0 -4.6 V0.4 L3.6 -1.6" fill="none" stroke="#2e9bd6" stroke-width="1.4"/></g><g transform="translate(652,70)" stroke="#2b2b2b" fill="none" stroke-width="1.3"><ellipse cx="0" cy="3.2" rx="2.7" ry="4" fill="#2b2b2b"/><circle cx="0" cy="-2.2" r="2" fill="#2b2b2b"/><path d="M-1.5 -2 L-5 -5 L-5.6 -9.6"/><path d="M-1.8 -0.6 L-6.6 -2.6 L-9 -6"/><path d="M-2 0.6 L-6.6 1.4 L-9 5"/><path d="M-2 2 L-5 5 L-5.6 9.6"/><path d="M1.5 -2 L5 -5 L5.6 -9.6"/><path d="M1.8 -0.6 L6.6 -2.6 L9 -6"/><path d="M2 0.6 L6.6 1.4 L9 5"/><path d="M2 2 L5 5 L5.6 9.6"/></g><rect x="678.5" y="62.2" width="19.6" height="15.7" rx="1.2" fill="none" stroke="#2b2b2b" stroke-width="1.4"/><path d="M677.8 65.8 V62.8 Q677.8 61.3 679.3 61.3 H697.3 Q698.8 61.3 698.8 62.8 V65.8 Z" fill="#2b2b2b"/><path d="M680.6 72 H683.4 L684.6 70.4 L685.8 72.6 L687.2 68.2 L689 75.4 L690.6 70 L691.8 72 H695.8" fill="none" stroke="#2e9bd6" stroke-width="1.2"/><path d="M709 61 V79.2 H728" fill="none" stroke="#2b2b2b" stroke-width="1.6"/><path d="M711.5 69.6 L714.6 66.2 L716.6 68.2 L720 64.6 L722 66.4 L726.6 62" fill="none" stroke="#2e9bd6" stroke-width="1.3"/><path d="M711.5 75.6 L714.4 73 L716.4 75 L719.6 72.4 L722 74.4 L726.4 71.6" fill="none" stroke="#2b2b2b" stroke-width="1.2"/><g transform="translate(748,71)"><circle r="7.5" fill="none" stroke="#2b2b2b" stroke-width="1.5"/><ellipse cx="-7.2" cy="-7.2" rx="3.6" ry="2.2" transform="rotate(-45 -7.2 -7.2)" fill="#2b2b2b"/><ellipse cx="7.2" cy="-7.2" rx="3.6" ry="2.2" transform="rotate(45 7.2 -7.2)" fill="#2b2b2b"/><path d="M-5 6.4 L-7.2 9.4 M5 6.4 L7.2 9.4" stroke="#2b2b2b" stroke-width="1.6"/><rect x="-1.3" y="-10.8" width="2.6" height="2.6" fill="#2b2b2b"/><path d="M-2.8 -3.2 L0 0.6 L3 -2" fill="none" stroke="#2e9bd6" stroke-width="1.4"/></g><defs><linearGradient id="ov" x1="0" y1="0" x2="0" y2="1"><stop offset="0" stop-color="#d0d0d0"/><stop offset="0.5" stop-color="#6a6a6a"/><stop offset="1" stop-color="#000"/></linearGradient></defs><path d="M766 53 H774 Q777 53 777 56 V83 Q777 86 774 86 H766 Z" fill="url(#ov)"/><rect x="769" y="78" width="6" height="1" fill="#fff"/><path d="M769 80.5 h6 l-3 3.4z" fill="#fff"/></svg><div class="a" style="left:107px;top:105px;width:321px;height:385px;background:#5b5b5b;box-sizing:border-box;border:1px solid #484848;"></div><div class="a" style="left:107px;top:105px;width:320px;height:25px;background:#fff;"></div><span class="t" style="left:110.60px;top:109.25px;height:17px;line-height:17px;font-size:12px;color:#9a9a9a;letter-spacing:-0.019px;">Map Indicator Turns To Chart</span><svg class="a" style="left:300px;top:105px" width="127" height="25" viewBox="0 0 127 25" fill="none" shape-rendering="crispEdges"><path d="M8 12.5 H18" stroke="#777"/><rect x="53.5" y="7.5" width="9" height="9" stroke="#dcdcdc"/><g shape-rendering="auto"><path d="M99.3 7.5 L109.3 17.2 M109.3 7.5 L99.3 17.2" stroke="#777" stroke-width="1"/></g></svg><div class="a" style="left:123px;top:146px;width:283px;height:243px;background:transparent;box-sizing:border-box;border:1px solid #151515;"></div><div class="a" style="left:127.19999999999999px;top:144px;width:97px;height:5px;background:#5b5b5b;"></div><span class="t" style="left:129.20px;top:139.25px;height:17px;line-height:17px;font-size:12px;color:#000;transform-origin:left center;transform:scaleX(0.8730);">Mapping Parameter</span><div class="a" style="left:126px;top:404px;width:280px;height:39px;background:transparent;box-sizing:border-box;border:1px solid #151515;"></div><div class="a" style="left:130.3px;top:402px;width:128.2px;height:5px;background:#5b5b5b;"></div><span class="t" style="left:132.30px;top:396.25px;height:17px;line-height:17px;font-size:12px;color:#000;transform-origin:left center;transform:scaleX(0.8796);">Realtime Mapping Service</span><span class="t" style="left:133.40px;top:163.25px;height:17px;line-height:17px;font-size:12px;color:#000;transform-origin:left center;transform:scaleX(0.8628);">Source Chart</span><div class="a" style="left:131px;top:181px;width:262px;height:20px;background:linear-gradient(#727272 0,#858585 30%,#868686);box-sizing:border-box;border:1px solid #0a0a0a;"></div><div class="a" style="left:376px;top:182px;width:16px;height:18px;background:linear-gradient(#f4f4f4,#b8b8b8);border-left:1px solid #333;"></div><svg class="a" style="left:380px;top:189.0px" width="9" height="5" viewBox="0 0 9 5"><path d="M0.5 0.5 H8.5 L4.5 4.6 Z" fill="#000"/></svg><span class="t" style="left:138.20px;top:183.25px;height:17px;line-height:17px;font-size:12px;color:#fff;transform-origin:left center;transform:scaleX(0.8938);">MSFT  1 250</span><span class="t" style="left:133.40px;top:203.25px;height:17px;line-height:17px;font-size:12px;color:#000;transform-origin:left center;transform:scaleX(0.8624);">Source Series</span><div class="a" style="left:131px;top:221px;width:262px;height:22px;background:linear-gradient(#727272 0,#858585 30%,#868686);box-sizing:border-box;border:1px solid #0a0a0a;"></div><div class="a" style="left:376px;top:222px;width:16px;height:20px;background:linear-gradient(#f4f4f4,#b8b8b8);border-left:1px solid #333;"></div><svg class="a" style="left:380px;top:230.0px" width="9" height="5" viewBox="0 0 9 5"><path d="M0.5 0.5 H8.5 L4.5 4.6 Z" fill="#000"/></svg><span class="t" style="left:138.20px;top:224.25px;height:17px;line-height:17px;font-size:12px;color:#fff;transform-origin:left center;transform:scaleX(0.8964);">MSFT.open</span><span class="t" style="left:133.40px;top:254.25px;height:17px;line-height:17px;font-size:12px;color:#000;transform-origin:left center;transform:scaleX(0.8575);">Destination Chart</span><div class="a" style="left:131px;top:272px;width:262px;height:20px;background:linear-gradient(#727272 0,#858585 30%,#868686);box-sizing:border-box;border:1px solid #0a0a0a;"></div><div class="a" style="left:376px;top:273px;width:16px;height:18px;background:linear-gradient(#f4f4f4,#b8b8b8);border-left:1px solid #333;"></div><svg class="a" style="left:380px;top:280.0px" width="9" height="5" viewBox="0 0 9 5"><path d="M0.5 0.5 H8.5 L4.5 4.6 Z" fill="#000"/></svg><span class="t" style="left:138.20px;top:274.25px;height:17px;line-height:17px;font-size:12px;color:#fff;transform-origin:left center;transform:scaleX(0.8938);">MSFT  1 250</span><div class="a" style="left:133px;top:300px;width:14px;height:14px;background:#8e8e8e;box-sizing:border-box;border:1px solid #111;"></div><svg class="a" style="left:133px;top:300px" width="14" height="14" viewBox="0 0 14 14"><path d="M3.2 7 L5.8 9.8 L10.8 3.8" fill="none" stroke="#fff" stroke-width="1.6"/></svg><span class="t" style="left:150.40px;top:297.25px;height:17px;line-height:17px;font-size:12px;color:#000;transform-origin:left center;transform:scaleX(0.9186);">Inverse Mapping</span><div class="a" style="left:133px;top:322px;width:14px;height:14px;background:#8e8e8e;box-sizing:border-box;border:1px solid #111;"></div><svg class="a" style="left:133px;top:322px" width="14" height="14" viewBox="0 0 14 14"><path d="M3.2 7 L5.8 9.8 L10.8 3.8" fill="none" stroke="#fff" stroke-width="1.6"/></svg><span class="t" style="left:150.40px;top:319.25px;height:17px;line-height:17px;font-size:12px;color:#000;transform-origin:left center;transform:scaleX(0.9163);">Draw Lines</span><div class="a" style="left:133px;top:344px;width:14px;height:14px;background:#8e8e8e;box-sizing:border-box;border:1px solid #111;"></div><svg class="a" style="left:133px;top:344px" width="14" height="14" viewBox="0 0 14 14"><path d="M3.2 7 L5.8 9.8 L10.8 3.8" fill="none" stroke="#fff" stroke-width="1.6"/></svg><span class="t" style="left:150.40px;top:341.25px;height:17px;line-height:17px;font-size:12px;color:#000;transform-origin:left center;transform:scaleX(0.9273);">Show Trade Statistics</span><div class="a" style="left:133px;top:366px;width:14px;height:14px;background:#8e8e8e;box-sizing:border-box;border:1px solid #111;"></div><svg class="a" style="left:133px;top:366px" width="14" height="14" viewBox="0 0 14 14"><path d="M3.2 7 L5.8 9.8 L10.8 3.8" fill="none" stroke="#fff" stroke-width="1.6"/></svg><span class="t" style="left:150.40px;top:363.25px;height:17px;line-height:17px;font-size:12px;color:#000;transform-origin:left center;transform:scaleX(0.9220);">Use Open (not Close)</span><div class="a" style="left:309px;top:298px;width:85px;height:20px;background:linear-gradient(#eeeeee,#c2c2c2);box-sizing:border-box;border:1px solid #0c0c0c;box-shadow:inset 0 0 0 1px rgba(255,255,255,.55);"></div><span class="t" style="left:350.50px;top:299.25px;height:17px;line-height:17px;font-size:12px;color:#000;transform-origin:center center;transform:translateX(-50%) scaleX(0.9227);">Remove Turns</span><span class="t" style="left:300.20px;top:365.25px;height:17px;line-height:17px;font-size:12px;color:#000;transform-origin:left center;transform:scaleX(0.8537);">Shift Plot</span><div class="a" style="left:355px;top:363px;width:39px;height:20px;background:linear-gradient(#7a7a7a,#8c8c8c);box-sizing:border-box;border:1px solid #0a0a0a;"></div><span class="t" style="left:357.30px;top:365.25px;height:17px;line-height:17px;font-size:12px;color:#fff;transform-origin:left center;transform:scaleX(0.8820);">0</span><div class="a" style="left:376px;top:365px;width:16px;height:8px;background:linear-gradient(#eee,#bbb);box-sizing:border-box;border:1px solid #222;"></div><div class="a" style="left:376px;top:373px;width:16px;height:8px;background:linear-gradient(#eee,#bbb);box-sizing:border-box;border:1px solid #222;"></div><svg class="a" style="left:380px;top:367px" width="9" height="13" viewBox="0 0 9 13"><path d="M0.5 4 H8.5 L4.5 0.4 Z M0.5 9 H8.5 L4.5 12.6 Z" fill="#000"/></svg><svg class="a" style="left:139.6px;top:417.5px" width="14" height="14" viewBox="0 0 14 14"><circle cx="7" cy="7" r="6" fill="#8e8e8e" stroke="#111" stroke-width="1"/></svg><span class="t" style="left:157.00px;top:415.25px;height:17px;line-height:17px;font-size:12px;color:#000;transform-origin:left center;transform:scaleX(0.9444);">ON</span><svg class="a" style="left:197.4px;top:417.5px" width="14" height="14" viewBox="0 0 14 14"><circle cx="7" cy="7" r="6" fill="#8e8e8e" stroke="#111" stroke-width="1"/><circle cx="7" cy="7" r="2.6" fill="#000"/></svg><span class="t" style="left:215.80px;top:415.25px;height:17px;line-height:17px;font-size:12px;color:#000;transform-origin:left center;transform:scaleX(0.9377);">OFF</span><div class="a" style="left:302px;top:414px;width:85px;height:20px;background:#484848;box-sizing:border-box;border:1px solid #111;"></div><span class="t" style="left:343.50px;top:415.25px;height:17px;line-height:17px;font-size:12px;color:#7c7c7c;transform-origin:center center;transform:translateX(-50%) scaleX(0.9274);">Show RT Result</span><div class="a" style="left:123px;top:457px;width:111px;height:20px;background:linear-gradient(#eeeeee,#c2c2c2);box-sizing:border-box;border:1px solid #0c0c0c;box-shadow:inset 0 0 0 1px rgba(255,255,255,.55);"></div><span class="t" style="left:177.50px;top:458.25px;height:17px;line-height:17px;font-size:12px;color:#000;transform-origin:center center;transform:translateX(-50%) scaleX(0.9173);">Map Turns</span><div class="a" style="left:321px;top:457px;width:85px;height:20px;background:linear-gradient(#eeeeee,#c2c2c2);box-sizing:border-box;border:1px solid #0c0c0c;box-shadow:inset 0 0 0 1px rgba(255,255,255,.55);"></div><span class="t" style="left:362.50px;top:458.25px;height:17px;line-height:17px;font-size:12px;color:#000;transform-origin:center center;transform:translateX(-50%) scaleX(0.9452);">Close</span><div class="a" style="left:598px;top:96px;width:340px;height:822px;background:#dcdcdc;"></div><div class="a" style="left:599px;top:151px;width:338px;height:766px;background:#000;"></div><div class="a" style="left:600px;top:152px;width:336px;height:764px;background:#626262;"></div><div class="a" style="left:598px;top:96px;width:340px;height:31px;background:#fff;"></div><div class="a" style="left:598px;top:127px;width:340px;height:24px;background:#f0f0f0;"></div><svg class="a" style="left:607px;top:103px" width="16" height="16" viewBox="0 0 16 16"><defs><linearGradient id="ig" x1="0" y1="0" x2="1" y2="1"><stop offset="0" stop-color="#1a2a6a"/><stop offset="0.5" stop-color="#0a1030"/><stop offset="1" stop-color="#05050f"/></linearGradient></defs><rect width="16" height="16" fill="url(#ig)"/><path d="M2 2 Q2.6 7 3 11" stroke="#3a5ad0" stroke-width="1.4" fill="none"/><path d="M0 10.5 L2 11.5 L3.5 10 L5 12.5 L6.5 10.5 L8 12.5 L9.2 8 L10.5 12.5 L12 10.5 L13.2 12.5 L14.5 10.5 L16 11.5" stroke="#3ec0e8" stroke-width="1" fill="none"/></svg><span class="t" style="left:628.30px;top:104.25px;height:17px;line-height:17px;font-size:12px;color:#000;letter-spacing:-0.247px;">Signal Statistics</span><svg class="a" style="left:810px;top:96px" width="127" height="31" viewBox="0 0 127 31" fill="none" stroke="#000" shape-rendering="crispEdges"><path d="M8 15.5 H18"/><rect x="53.5" y="10.5" width="9" height="9"/><g shape-rendering="auto"><path d="M99.3 10.3 L109.3 20.3 M109.3 10.3 L99.3 20.3" stroke-width="1.1"/></g></svg><div class="a" style="left:601px;top:131px;width:58px;height:20px;background:linear-gradient(#dedede,#bcbcbc);box-sizing:border-box;border:1px solid #2c2c2c;border-bottom:none;border-radius:4px 4px 0 0;"></div><span class="t" style="left:606.20px;top:134.25px;height:17px;line-height:17px;font-size:12px;color:#000;transform-origin:left center;transform:scaleX(0.8453);">Signal List</span><div class="a" style="left:747px;top:131px;width:43px;height:20px;background:linear-gradient(#dedede,#bcbcbc);box-sizing:border-box;border:1px solid #2c2c2c;border-bottom:none;border-radius:4px 4px 0 0;"></div><span class="t" style="left:751.60px;top:134.25px;height:17px;line-height:17px;font-size:12px;color:#000;transform-origin:left center;transform:scaleX(0.8536);">Trades</span><div class="a" style="left:791px;top:131px;width:71px;height:20px;background:linear-gradient(#dedede,#bcbcbc);box-sizing:border-box;border:1px solid #2c2c2c;border-bottom:none;border-radius:4px 4px 0 0;"></div><span class="t" style="left:795.90px;top:134.25px;height:17px;line-height:17px;font-size:12px;color:#000;transform-origin:left center;transform:scaleX(0.8676);">Equity Curve</span><div class="a" style="left:660px;top:129px;width:87px;height:23px;background:linear-gradient(#dcdcdc,#a4a4a4);box-sizing:border-box;border:1px solid #2a2a2a;border-bottom:none;border-radius:4px 4px 0 0;"></div><div class="a" style="left:663px;top:132px;width:81px;height:18px;background:transparent;box-sizing:border-box;border:1px dotted #222;"></div><span class="t" style="left:666.50px;top:132.25px;height:17px;line-height:17px;font-size:12px;color:#000;transform-origin:left center;transform:scaleX(0.8754);">Trade Statistics</span><div class="a" style="left:603px;top:156px;width:330px;height:757px;background:#848484;box-sizing:border-box;border:1px solid #000;"></div><span class="t" style="left:605.30px;top:157.25px;height:17px;line-height:17px;font-size:12px;color:#fff;transform-origin:left center;transform:scaleX(0.8820);">Number of trades: 121</span><span class="t" style="left:605.30px;top:170.25px;height:17px;line-height:17px;font-size:12px;color:#fff;transform-origin:left center;transform:scaleX(0.8820);">#  Winning trades: 0</span><span class="t" style="left:605.30px;top:183.25px;height:17px;line-height:17px;font-size:12px;color:#fff;transform-origin:left center;transform:scaleX(0.8820);">#  Losing trades: 121</span><span class="t" style="left:605.30px;top:196.25px;height:17px;line-height:17px;font-size:12px;color:#fff;transform-origin:left center;transform:scaleX(0.8820);">-&gt; Accuracy: 0,00%</span><span class="t" style="left:605.30px;top:222.25px;height:17px;line-height:17px;font-size:12px;color:#fff;transform-origin:left center;transform:scaleX(0.8820);">Total profit: -104,14</span><span class="t" style="left:605.30px;top:235.25px;height:17px;line-height:17px;font-size:12px;color:#fff;transform-origin:left center;transform:scaleX(0.8820);">#  Long profit: -47,77</span><span class="t" style="left:605.30px;top:248.25px;height:17px;line-height:17px;font-size:12px;color:#fff;transform-origin:left center;transform:scaleX(0.8820);">#  Short profit: -56,37</span><span class="t" style="left:605.30px;top:274.25px;height:17px;line-height:17px;font-size:12px;color:#fff;transform-origin:left center;transform:scaleX(0.8820);">#  Gross profit: 0</span><span class="t" style="left:605.30px;top:287.25px;height:17px;line-height:17px;font-size:12px;color:#fff;transform-origin:left center;transform:scaleX(0.8820);">#  Gross loss: -104,14</span><span class="t" style="left:605.30px;top:300.25px;height:17px;line-height:17px;font-size:12px;color:#fff;transform-origin:left center;transform:scaleX(0.8820);">-&gt; Profit Factor: 0,00</span><span class="t" style="left:605.30px;top:326.25px;height:17px;line-height:17px;font-size:12px;color:#fff;transform-origin:left center;transform:scaleX(0.8820);">Avg. Win: не число</span><span class="t" style="left:605.30px;top:339.25px;height:17px;line-height:17px;font-size:12px;color:#fff;transform-origin:left center;transform:scaleX(0.8820);">Avg. Loss: -0,86066</span><span class="t" style="left:605.30px;top:352.25px;height:17px;line-height:17px;font-size:12px;color:#fff;transform-origin:left center;transform:scaleX(0.8820);">-&gt; Win/Loss Ratio: не число</span><span class="t" style="left:605.30px;top:378.25px;height:17px;line-height:17px;font-size:12px;color:#fff;transform-origin:left center;transform:scaleX(0.8820);">Largest profit: 0</span><span class="t" style="left:605.30px;top:391.25px;height:17px;line-height:17px;font-size:12px;color:#fff;transform-origin:left center;transform:scaleX(0.8820);">Largest loss: -4,85</span><span class="t" style="left:605.30px;top:417.25px;height:17px;line-height:17px;font-size:12px;color:#fff;transform-origin:left center;transform:scaleX(0.8820);">Maximum DrawDown abs : -104,14</span><span class="t" style="left:605.30px;top:430.25px;height:17px;line-height:17px;font-size:12px;color:#fff;transform-origin:left center;transform:scaleX(0.8820);">Maximum DrawDown  %  : 0,00%</span><div class="a" style="left:0px;top:1115px;width:1600px;height:22px;background:#767676;"></div><div class="a" style="left:1599px;top:1115px;width:1px;height:22px;background:#000;"></div><div class="a" style="left:0px;top:1115px;width:1px;height:22px;background:#000;"></div><div class="a" style="left:0px;top:1137px;width:1600px;height:1px;background:#000;"></div><div class="a" style="left:0px;top:1138px;width:1600px;height:22px;background:#858585;"></div><div class="a" style="left:7px;top:1115px;width:65.3px;height:20px;background:linear-gradient(#dcdcdc,#c4c4c4);box-sizing:border-box;border:1px solid #0a0a0a;border-top:none;border-radius:0 0 4px 4px;box-shadow:inset 1px 1px 0 rgba(255,255,255,.5);"></div><span class="t" style="left:38.75px;top:1117.25px;height:15px;line-height:15px;font-size:11px;color:#000;letter-spacing:-0.525px;transform:translateX(-50%);">MSFT Day1</span><div class="a" style="left:73.6px;top:1115px;width:56.3px;height:20px;background:linear-gradient(#dcdcdc,#c4c4c4);box-sizing:border-box;border:1px solid #0a0a0a;border-top:none;border-radius:0 0 4px 4px;box-shadow:inset 1px 1px 0 rgba(255,255,255,.5);"></div><span class="t" style="left:100.85px;top:1117.25px;height:15px;line-height:15px;font-size:11px;color:#000;letter-spacing:-0.110px;transform:translateX(-50%);">Back Test</span><div class="a" style="left:131px;top:1115px;width:39px;height:20px;background:linear-gradient(#dcdcdc,#c4c4c4);box-sizing:border-box;border:1px solid #0a0a0a;border-top:none;border-radius:0 0 4px 4px;box-shadow:inset 1px 1px 0 rgba(255,255,255,.5);"></div><span class="t" style="left:149.60px;top:1117.25px;height:15px;line-height:15px;font-size:11px;color:#000;letter-spacing:-0.074px;transform:translateX(-50%);">Forex</span><div class="a" style="left:171px;top:1114px;width:75px;height:21px;background:linear-gradient(#7c7c7c,#d8d8d8);box-sizing:border-box;border:1px solid #0a0a0a;border-top:none;border-radius:0 0 4px 4px;"></div><span class="t" style="left:207.80px;top:1117.25px;height:15px;line-height:15px;font-size:11px;color:#000;letter-spacing:-0.064px;font-weight:bold;transform:translateX(-50%);">GOOG Day1</span><div class="a" style="left:247.2px;top:1115px;width:106.3px;height:20px;background:linear-gradient(#dcdcdc,#c4c4c4);box-sizing:border-box;border:1px solid #0a0a0a;border-top:none;border-radius:0 0 4px 4px;box-shadow:inset 1px 1px 0 rgba(255,255,255,.5);"></div><span class="t" style="left:299.45px;top:1117.25px;height:15px;line-height:15px;font-size:11px;color:#000;letter-spacing:-0.246px;transform:translateX(-50%);">Genetic Engineering</span><span class="t" style="left:4.50px;top:1142.25px;height:17px;line-height:17px;font-size:12px;color:#000;letter-spacing:-0.013px;">GOOG | 22.12.2016 7:00:00 | Close: 791,26 | Bar: 175 | Y: 853,28</span><span class="t" style="left:1488.10px;top:1142.25px;height:17px;line-height:17px;font-size:12px;color:#000;letter-spacing:-0.001px;">05:31:01</span><svg class="a" style="left:1565px;top:1118px" width="32" height="16" viewBox="0 0 32 16"><path d="M3.8 7 H13 L8.4 12 Z" fill="#000"/><path d="M20.2 4.2 L27.8 10.8 M27.8 4.2 L20.2 10.8" stroke="#000" stroke-width="1.4"/></svg><span class="t" style="left:352px;top:1112.25px;height:30px;line-height:30px;font-family:'DejaVu Serif',serif;font-style:italic;font-size:21px;letter-spacing:1.977px;color:#f02028;-webkit-text-stroke:0.45px #f02028;text-shadow:0 0 2px #fff,0 0 3px #fff,0 0 4px #fff,0 0 5px #fff,0 0 7px #fff,1px 2px 4px #eee;">www.forex-warez.com, andreybbrv@gmail.com, Skype: andreybbrv</span></body></html>
